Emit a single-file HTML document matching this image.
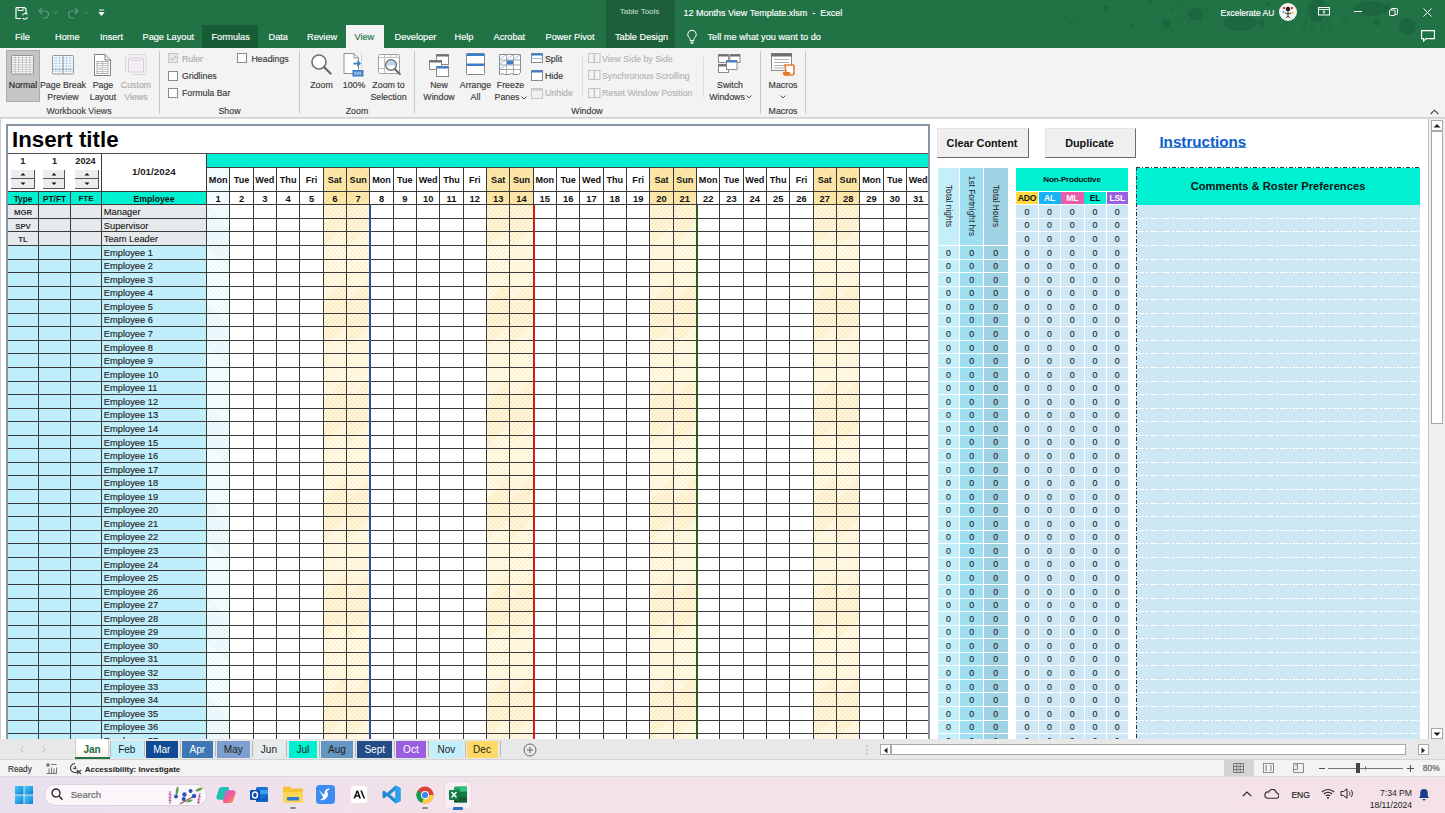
<!DOCTYPE html><html><head><meta charset="utf-8"><title>Excel</title><style>
*{box-sizing:border-box;margin:0;padding:0}
html,body{width:1445px;height:813px;overflow:hidden;background:#fff}
body{position:relative;font-family:"Liberation Sans",sans-serif;color:#000}
.a{position:absolute}
.t{position:absolute;white-space:nowrap;line-height:1}
.t.n{-webkit-text-stroke:0.15px currentColor}
.tb{position:absolute;white-space:nowrap;line-height:1;font-weight:bold}
.w{color:#fff}
.rb{color:#444;font-size:8.3px}
.dis{color:#a8a8a8}
.hl{position:absolute;height:1px;background:#3c3c3c}
.vl{position:absolute;width:1px;background:#3c3c3c}
</style></head><body>
<div class="a" style="left:0;top:0;width:1445px;height:48px;background:#217346"></div>
<div class="a" style="left:606px;top:0;width:69px;height:48px;background:#1c5f3a"></div>
<div class="a" style="left:202px;top:25px;width:56px;height:23px;background:#185c36"></div>
<div class="a" style="left:346px;top:25px;width:38px;height:23px;background:#f3f3f3"></div>
<div class="t n" style="left:15px;top:33.01px;font-size:9.2px;color:#fff;font-weight:normal;">File</div>
<div class="t n" style="left:55px;top:33.01px;font-size:9.2px;color:#fff;font-weight:normal;">Home</div>
<div class="t n" style="left:100px;top:33.01px;font-size:9.2px;color:#fff;font-weight:normal;">Insert</div>
<div class="t n" style="left:142.5px;top:33.01px;font-size:9.2px;color:#fff;font-weight:normal;">Page Layout</div>
<div class="t n" style="left:211.5px;top:33.01px;font-size:9.2px;color:#fff;font-weight:normal;">Formulas</div>
<div class="t n" style="left:268.5px;top:33.01px;font-size:9.2px;color:#fff;font-weight:normal;">Data</div>
<div class="t n" style="left:307px;top:33.01px;font-size:9.2px;color:#fff;font-weight:normal;">Review</div>
<div class="t n" style="left:354.5px;top:33.01px;font-size:9.2px;color:#217346;font-weight:normal;">View</div>
<div class="t n" style="left:394.5px;top:33.01px;font-size:9.2px;color:#fff;font-weight:normal;">Developer</div>
<div class="t n" style="left:454.5px;top:33.01px;font-size:9.2px;color:#fff;font-weight:normal;">Help</div>
<div class="t n" style="left:493.5px;top:33.01px;font-size:9.2px;color:#fff;font-weight:normal;">Acrobat</div>
<div class="t n" style="left:545.5px;top:33.01px;font-size:9.2px;color:#fff;font-weight:normal;">Power Pivot</div>
<div class="t n" style="left:615px;top:33.01px;font-size:9.2px;color:#fff;font-weight:normal;">Table Design</div>
<div class="t n" style="left:619.8px;top:8.11px;font-size:7.9px;color:#b9d3c2;font-weight:normal;">Table Tools</div>
<div class="t n" style="left:683.5px;top:8.88px;font-size:9px;color:#fff;font-weight:normal;">12 Months View Template.xlsm&nbsp;&nbsp;-&nbsp;&nbsp;Excel</div>
<div class="t n" style="left:707.5px;top:33.01px;font-size:9.2px;color:#fff;font-weight:normal;">Tell me what you want to do</div>
<svg class="a" style="left:686px;top:29px" width="12" height="15" viewBox="0 0 12 15"><path d="M6 1.2a4.3 4.3 0 0 0-2.6 7.7c.5.4.8 1 .8 1.6v1h3.6v-1c0-.6.3-1.2.8-1.6A4.3 4.3 0 0 0 6 1.2z" fill="none" stroke="#fff" stroke-width="1"/><path d="M4.3 13h3.4M4.8 14.3h2.4" stroke="#fff" stroke-width="1"/></svg>
<svg class="a" style="left:14px;top:6px" width="14" height="14" viewBox="0 0 14 14"><path d="M2 1.5h8.5l1.5 1.5v4.5M2 1.5v11h5" fill="none" stroke="#fff" stroke-width="1.2"/><path d="M4 1.5v3h5v-3" fill="none" stroke="#fff" stroke-width="1"/><path d="M8.5 9.2a3 3 0 0 1 5-.8M13.5 11.3a3 3 0 0 1-5 .8" fill="none" stroke="#fff" stroke-width="1.1"/></svg>
<svg class="a" style="left:37px;top:6px" width="22" height="13" viewBox="0 0 22 13"><path d="M2 5h6a3.5 3.5 0 0 1 0 7H6M2 5l3-3M2 5l3 3" fill="none" stroke="#5f9a78" stroke-width="1.2"/><path d="M16.5 5.5l2 2 2-2" fill="none" stroke="#5f9a78" stroke-width="0.9"/></svg>
<svg class="a" style="left:67.5px;top:6px" width="22" height="13" viewBox="0 0 22 13"><path d="M10 5H4a3.5 3.5 0 0 0 0 7h2M10 5L7 2M10 5L7 8" fill="none" stroke="#5f9a78" stroke-width="1.2"/><path d="M16.5 5.5l2 2 2-2" fill="none" stroke="#5f9a78" stroke-width="0.9"/></svg>
<svg class="a" style="left:98px;top:9px" width="7" height="8" viewBox="0 0 7 8"><path d="M1 1h5M1 3.5h5l-2.5 3z" fill="#fff" stroke="#fff" stroke-width="0.9"/></svg>
<svg class="a" style="left:1040px;top:0" width="405" height="48" viewBox="1040 0 405 48"><g fill="#000" fill-opacity="0.1" stroke="#000" stroke-opacity="0.06"><g stroke="none"><circle cx="1106.6" cy="8.4" r="2.8"/><circle cx="1149.7" cy="1" r="3"/><circle cx="1132.6" cy="24.7" r="2"/><circle cx="1171.5" cy="8.4" r="1.7"/><ellipse cx="1166.5" cy="23" rx="4.5" ry="4.5"/><ellipse cx="1195.5" cy="14" rx="8" ry="6"/><ellipse cx="1240" cy="23" rx="17" ry="8"/><ellipse cx="1317.3" cy="10" rx="10" ry="11"/><ellipse cx="1370.5" cy="8.5" rx="17" ry="7.5"/><circle cx="1376.9" cy="22" r="3.5"/><circle cx="1407.4" cy="26.2" r="8.5"/><circle cx="1268" cy="4.3" r="2"/></g><path d="M1161 28l-3 5M1166 28v6M1171 28l3 5M1186 12l-8-8M1205 12l8-7M1187 17l-9 5M1204 17l9 5M1191 19l-3 6M1200 19l3 6" fill="none" stroke-width="2"/><path d="M1307 18l-4 12M1313 19l-2 12M1321 19l2 12M1327 18l4 12" fill="none" stroke-width="3"/><path d="M1385 8l5-6v13z M1258 23l6-5v10z" stroke="none"/><path d="M1065 16l6 5 6-5M1066 27l5-5 6 5M1340 14l5 5 5-5M1341 24l4-4 5 4M1277 22l5 5 6-5M1277 30l5-3 6 3" fill="none" stroke-width="1.5"/></g></svg>
<div class="t n" style="left:1220.5px;top:9.10px;font-size:8.5px;color:#fff;font-weight:normal;">Excelerate AU</div>
<div class="a" style="left:1279px;top:3px;width:18px;height:18px;border-radius:50%;background:#f4f4f4"></div>
<svg class="a" style="left:1280px;top:4px" width="16" height="16" viewBox="0 0 16 16"><circle cx="8" cy="5" r="2.3" fill="#222"/><path d="M8 7v5M5 9l3 1 3-1M6 14l2-2 2 2" stroke="#333" stroke-width="1" fill="none"/><circle cx="4" cy="4" r="1.2" fill="#e33"/><circle cx="12" cy="4" r="1.2" fill="#e33"/><circle cx="3.5" cy="8" r="1" fill="#29f"/><circle cx="12.5" cy="9" r="1" fill="#fb0"/></svg>
<svg class="a" style="left:1317.5px;top:7px" width="12" height="9" viewBox="0 0 12 9"><rect x="0.5" y="0.5" width="11" height="7.5" fill="none" stroke="#fff" stroke-width="1"/><path d="M0.5 2.5h11M6 3.8v3.4M4.6 5.2L6 3.8l1.4 1.4" fill="none" stroke="#fff" stroke-width="0.9"/></svg>
<div class="a" style="left:1354px;top:11px;width:8px;height:1px;background:#fff"></div>
<svg class="a" style="left:1388.5px;top:7.5px" width="9" height="8" viewBox="0 0 9 8"><rect x="0.5" y="2" width="5.5" height="5.5" rx="0.8" fill="none" stroke="#fff" stroke-width="1"/><path d="M2.3 2V1.3c0-.5.3-.8.8-.8h4.6c.5 0 .8.3.8.8v4.4c0 .5-.3.8-.8.8H6" fill="none" stroke="#fff" stroke-width="1"/></svg>
<svg class="a" style="left:1423px;top:7.5px" width="9" height="9" viewBox="0 0 9 9"><path d="M0.5 0.5l8 8M8.5 0.5l-8 8" stroke="#fff" stroke-width="1"/></svg>
<svg class="a" style="left:1421px;top:30px" width="14" height="12" viewBox="0 0 14 12"><path d="M0.6 0.6h12.8v8H5l-2.5 2.5V8.6H0.6z" fill="none" stroke="#fff" stroke-width="1.1"/></svg>
<div class="a" style="left:0;top:48px;width:1445px;height:70px;background:#f3f3f3"></div>
<div class="a" style="left:0;top:117px;width:1445px;height:1px;background:#cfcfcf"></div>
<div class="a" style="left:0;top:118px;width:1445px;height:1px;background:#dedede"></div>
<div class="a" style="left:159px;top:51px;width:1px;height:63px;background:#c8c8c8"></div>
<div class="a" style="left:299px;top:51px;width:1px;height:63px;background:#c8c8c8"></div>
<div class="a" style="left:414px;top:51px;width:1px;height:63px;background:#c8c8c8"></div>
<div class="a" style="left:760px;top:51px;width:1px;height:63px;background:#c8c8c8"></div>
<div class="a" style="left:805px;top:51px;width:1px;height:63px;background:#c8c8c8"></div>
<div class="a" style="left:582px;top:57px;width:1px;height:40px;background:#dcdcdc"></div>
<div class="a" style="left:703px;top:57px;width:1px;height:40px;background:#dcdcdc"></div>
<div class="a" style="left:6px;top:50px;width:34px;height:52px;background:#c5c5c5;border:1px solid #ababab"></div>
<div class="t n" style="left:-127px;width:300px;text-align:center;top:80.95px;font-size:8.8px;color:#262626;font-weight:normal;">Normal</div>
<div class="t n" style="left:-87px;width:300px;text-align:center;top:80.95px;font-size:8.8px;color:#3a3a3a;font-weight:normal;">Page Break</div>
<div class="t n" style="left:-87px;width:300px;text-align:center;top:93.15px;font-size:8.8px;color:#3a3a3a;font-weight:normal;">Preview</div>
<div class="t n" style="left:-47px;width:300px;text-align:center;top:80.95px;font-size:8.8px;color:#3a3a3a;font-weight:normal;">Page</div>
<div class="t n" style="left:-47px;width:300px;text-align:center;top:93.15px;font-size:8.8px;color:#3a3a3a;font-weight:normal;">Layout</div>
<div class="t n" style="left:-14px;width:300px;text-align:center;top:80.95px;font-size:8.8px;color:#ababab;font-weight:normal;">Custom</div>
<div class="t n" style="left:-14px;width:300px;text-align:center;top:93.15px;font-size:8.8px;color:#ababab;font-weight:normal;">Views</div>
<div class="t n" style="left:-71px;width:300px;text-align:center;top:107.05px;font-size:8.8px;color:#444;font-weight:normal;">Workbook Views</div>
<div class="t n" style="left:79.5px;width:300px;text-align:center;top:107.05px;font-size:8.8px;color:#3a3a3a;font-weight:normal;">Show</div>
<div class="t n" style="left:207px;width:300px;text-align:center;top:107.05px;font-size:8.8px;color:#3a3a3a;font-weight:normal;">Zoom</div>
<div class="t n" style="left:437px;width:300px;text-align:center;top:107.05px;font-size:8.8px;color:#3a3a3a;font-weight:normal;">Window</div>
<div class="t n" style="left:633px;width:300px;text-align:center;top:107.05px;font-size:8.8px;color:#3a3a3a;font-weight:normal;">Macros</div>
<svg class="a" style="left:11px;top:54.5px" width="24" height="20" viewBox="0 0 24 20"><rect x="0.5" y="0.5" width="22" height="18.5" rx="1" fill="#fff" stroke="#8f8f8f"/><path d="M4.17 0.5v18.5M7.83 0.5v18.5M11.50 0.5v18.5M15.17 0.5v18.5M18.83 0.5v18.5M0.5 2.81h22M0.5 5.12h22M0.5 7.44h22M0.5 9.75h22M0.5 12.06h22M0.5 14.38h22M0.5 16.69h22" stroke="#b9b9b9" stroke-width="0.8"/></svg>
<svg class="a" style="left:52px;top:54.5px" width="23" height="20" viewBox="0 0 23 20"><rect x="0.5" y="0.5" width="21" height="18.5" rx="1" fill="#fff" stroke="#8f8f8f"/><path d="M4.00 0.5v18.5M7.50 0.5v18.5M11.00 0.5v18.5M14.50 0.5v18.5M18.00 0.5v18.5M0.5 3.14h21M0.5 5.79h21M0.5 8.43h21M0.5 11.07h21M0.5 13.71h21M0.5 16.36h21" stroke="#b3cff0" stroke-width="0.8"/><path d="M11 0.5v18.5" stroke="#8f8f8f" stroke-width="0.9"/><path d="M0.5 14.5h21" stroke="#8f8f8f" stroke-width="0.9" stroke-dasharray="1.5 1"/></svg>
<svg class="a" style="left:94px;top:53.5px" width="18" height="22" viewBox="0 0 18 22"><path d="M0.5 0.5h10.5l5.5 5.5v15.5h-16z" fill="#fff" stroke="#7f7f7f"/><path d="M11 0.5v5.5h5.5" fill="none" stroke="#7f7f7f"/><rect x="3" y="7.5" width="11" height="12" fill="#fff" stroke="#9a9a9a" stroke-width="0.8"/><path d="M3 9.5h11M3 11.5h11M3 13.5h11M3 15.5h11M3 17.5h11M8.5 7.5v12" stroke="#a8a8a8" stroke-width="0.7"/><path d="M3 13.5h11v2H3z" fill="#e4e4e4"/></svg>
<svg class="a" style="left:124px;top:54px" width="24" height="22" viewBox="0 0 24 22"><path d="M5 0.5h16M21 0.5v1M5 0.5v1" stroke="#cfcfcf" stroke-width="0.8"/><path d="M1.5 4v13M0.5 4h2M0.5 17h2" stroke="#cfcfcf" stroke-width="0.8"/><rect x="4.5" y="4" width="15" height="14" rx="1" fill="#f5eff6" stroke="#cfcfcf"/><path d="M6.5 6.5h11" stroke="#d8c9dc"/><path d="M8 20.5h14v-17" fill="none" stroke="#cfcfcf" stroke-width="0.8"/></svg>
<div class="a" style="left:168px;top:53px;width:10px;height:10px;background:#e6e6e6;border:1px solid #c6c6c6"></div>
<svg class="a" style="left:168px;top:53px" width="10" height="10" viewBox="0 0 10 10"><path d="M2.2 5.2l2 2 3.8-4.2" fill="none" stroke="#b0b0b0" stroke-width="1"/></svg>
<div class="a" style="left:168px;top:70.5px;width:10px;height:10px;background:#fff;border:1px solid #8a8a8a"></div>
<div class="a" style="left:168px;top:88px;width:10px;height:10px;background:#fff;border:1px solid #8a8a8a"></div>
<div class="a" style="left:237px;top:53px;width:10px;height:10px;background:#fff;border:1px solid #8a8a8a"></div>
<div class="t n" style="left:182px;top:54.55px;font-size:8.8px;color:#ababab;font-weight:normal;">Ruler</div>
<div class="t n" style="left:182px;top:71.85px;font-size:8.8px;color:#3a3a3a;font-weight:normal;">Gridlines</div>
<div class="t n" style="left:182px;top:89.15px;font-size:8.8px;color:#3a3a3a;font-weight:normal;">Formula Bar</div>
<div class="t n" style="left:251.5px;top:54.55px;font-size:8.8px;color:#3a3a3a;font-weight:normal;">Headings</div>
<div class="t n" style="left:171.5px;width:300px;text-align:center;top:80.95px;font-size:8.8px;color:#3a3a3a;font-weight:normal;">Zoom</div>
<div class="t n" style="left:204px;width:300px;text-align:center;top:80.95px;font-size:8.8px;color:#3a3a3a;font-weight:normal;">100%</div>
<div class="t n" style="left:238.5px;width:300px;text-align:center;top:80.95px;font-size:8.8px;color:#3a3a3a;font-weight:normal;">Zoom to</div>
<div class="t n" style="left:238.5px;width:300px;text-align:center;top:93.15px;font-size:8.8px;color:#3a3a3a;font-weight:normal;">Selection</div>
<svg class="a" style="left:310px;top:53px" width="23" height="23" viewBox="0 0 23 23"><circle cx="9" cy="9" r="7" fill="#fff" stroke="#6e6e6e" stroke-width="1.6"/><path d="M14 14l6.5 6.5" stroke="#6e6e6e" stroke-width="2.4" stroke-linecap="round"/></svg>
<svg class="a" style="left:343px;top:52px" width="22" height="25" viewBox="0 0 22 25"><path d="M1 1.5h10l4.5 4.5v15.5H1z" fill="#fff" stroke="#8f8f8f"/><path d="M11 1.5v4.5h4.5" fill="none" stroke="#8f8f8f"/><path d="M18.5 1.5v16" stroke="#b5b5b5" stroke-dasharray="1 1"/><path d="M10.5 11.6h6.5M14.3 9.2l2.6 2.4-2.6 2.4" fill="none" stroke="#3d7cc9" stroke-width="1.6"/><rect x="9.5" y="18" width="11" height="6.5" fill="#3d7cc9"/><path d="M11.3 21.2h7.4" stroke="#e8f0fa" stroke-width="3" stroke-dasharray="2 .5"/><rect x="11" y="19.8" width="8" height="3" fill="#3d7cc9" fill-opacity=".45"/></svg>
<svg class="a" style="left:377px;top:54px" width="25" height="24" viewBox="0 0 25 24"><rect x="1.5" y="0.5" width="21" height="19" rx="1" fill="#fff" stroke="#a0a0a0"/><path d="M1.5 3.5h21M1.5 14.5h7M7.5 0.5v19M13.5 0.5v3M19.5 0.5v3" stroke="#c0c0c0"/><circle cx="14" cy="11" r="5.3" fill="#fff" stroke="#6e6e6e" stroke-width="1.5"/><path d="M9.5 11.5a4.5 4.5 0 0 1 9 0z" fill="#b9d3ef"/><path d="M17.8 15l5 5" stroke="#6e6e6e" stroke-width="2.2" stroke-linecap="round"/></svg>
<div class="t n" style="left:289px;width:300px;text-align:center;top:80.95px;font-size:8.8px;color:#3a3a3a;font-weight:normal;">New</div>
<div class="t n" style="left:289px;width:300px;text-align:center;top:93.15px;font-size:8.8px;color:#3a3a3a;font-weight:normal;">Window</div>
<div class="t n" style="left:325.5px;width:300px;text-align:center;top:80.95px;font-size:8.8px;color:#3a3a3a;font-weight:normal;">Arrange</div>
<div class="t n" style="left:325.5px;width:300px;text-align:center;top:93.15px;font-size:8.8px;color:#3a3a3a;font-weight:normal;">All</div>
<div class="t n" style="left:360.5px;width:300px;text-align:center;top:80.95px;font-size:8.8px;color:#3a3a3a;font-weight:normal;">Freeze</div>
<div class="t n" style="left:357px;width:300px;text-align:center;top:93.15px;font-size:8.8px;color:#3a3a3a;font-weight:normal;">Panes</div>
<svg class="a" style="left:521px;top:96px" width="6" height="4" viewBox="0 0 6 4"><path d="M0.5 0.5l2.5 2.5 2.5-2.5" fill="none" stroke="#555"/></svg>
<svg class="a" style="left:428.5px;top:53.5px" width="22" height="23" viewBox="0 0 22 23"><rect x="7.5" y="0.5" width="12" height="10" fill="#fff" stroke="#8a8a8a"/><rect x="7.5" y="0.5" width="12" height="2" fill="#6e6e6e"/><rect x="0.5" y="6.5" width="12" height="9" fill="#fff" stroke="#8a8a8a"/><rect x="0.5" y="6.5" width="12" height="2" fill="#6e6e6e"/><rect x="7.5" y="12.5" width="12" height="10" fill="#fff" stroke="#8a8a8a"/><rect x="7.5" y="12.5" width="12" height="2" fill="#3d7cc9"/></svg>
<svg class="a" style="left:466px;top:53px" width="20" height="23" viewBox="0 0 20 23"><rect x="0.5" y="0.5" width="18" height="21" rx="0.8" fill="#fff" stroke="#8a8a8a"/><rect x="0.5" y="0.5" width="18" height="2.5" fill="#3d7cc9"/><rect x="0.5" y="10.5" width="18" height="2.5" fill="#3d7cc9"/></svg>
<svg class="a" style="left:499px;top:54px" width="23" height="22" viewBox="0 0 23 22"><path d="M0.5 0.5h21v18l-2 2h-5l-2-1-2 1h-5l-2-1-2 1h-1z" fill="#fff" stroke="#8a8a8a"/><path d="M0.5 6h21M0.5 11h21M0.5 15.5h21M7.5 0.5v20M14.5 0.5v20" stroke="#a8a8a8"/><path d="M1 5l6-4M1 10l6-4M1 15l6-4M8 5l6-4M15 5l6-4" stroke="#9cc0e6" stroke-width="1"/><rect x="8" y="6.5" width="6" height="4" fill="#3d7cc9"/></svg>
<svg class="a" style="left:531px;top:53px" width="12" height="10" viewBox="0 0 12 10"><rect x="0.5" y="0.5" width="11" height="9" fill="#fff" stroke="#8a8a8a"/><rect x="0.5" y="0.5" width="11" height="2" fill="#3d7cc9"/><path d="M0.5 5.5h11" stroke="#9cc0e6"/></svg>
<svg class="a" style="left:531px;top:70px" width="12" height="11" viewBox="0 0 12 11"><rect x="0.5" y="0.5" width="11" height="10" fill="#fff" stroke="#8a8a8a"/><rect x="0.5" y="0.5" width="11" height="2" fill="#3d7cc9"/></svg>
<svg class="a" style="left:531px;top:88px" width="12" height="11" viewBox="0 0 12 11"><rect x="0.5" y="0.5" width="11" height="10" fill="#f0f0f0" stroke="#c8c8c8"/><rect x="0.5" y="0.5" width="11" height="2" fill="#c8c8c8"/></svg>
<div class="t n" style="left:545px;top:54.55px;font-size:8.8px;color:#333;font-weight:normal;">Split</div>
<div class="t n" style="left:545px;top:71.85px;font-size:8.8px;color:#333;font-weight:normal;">Hide</div>
<div class="t n" style="left:545px;top:89.15px;font-size:8.8px;color:#b0b0b0;font-weight:normal;">Unhide</div>
<svg class="a" style="left:588px;top:53px" width="13" height="11" viewBox="0 0 13 11"><rect x="0.5" y="0.5" width="5.5" height="9" fill="none" stroke="#c4c4c4"/><rect x="6.5" y="0.5" width="5.5" height="9" fill="none" stroke="#c4c4c4"/></svg>
<svg class="a" style="left:588px;top:70px" width="13" height="11" viewBox="0 0 13 11"><rect x="0.5" y="0.5" width="5.5" height="9" fill="none" stroke="#c4c4c4"/><rect x="6.5" y="0.5" width="5.5" height="9" fill="none" stroke="#c4c4c4"/></svg>
<svg class="a" style="left:588px;top:88px" width="13" height="11" viewBox="0 0 13 11"><rect x="0.5" y="0.5" width="5.5" height="9" fill="none" stroke="#c4c4c4"/><rect x="6.5" y="0.5" width="5.5" height="9" fill="none" stroke="#c4c4c4"/></svg>
<div class="t n" style="left:602px;top:54.55px;font-size:8.8px;color:#b3b3b3;font-weight:normal;">View Side by Side</div>
<div class="t n" style="left:602px;top:71.85px;font-size:8.8px;color:#b3b3b3;font-weight:normal;">Synchronous Scrolling</div>
<div class="t n" style="left:602px;top:89.15px;font-size:8.8px;color:#b3b3b3;font-weight:normal;">Reset Window Position</div>
<div class="t n" style="left:580px;width:300px;text-align:center;top:80.95px;font-size:8.8px;color:#3a3a3a;font-weight:normal;">Switch</div>
<div class="t n" style="left:577px;width:300px;text-align:center;top:93.15px;font-size:8.8px;color:#3a3a3a;font-weight:normal;">Windows</div>
<svg class="a" style="left:746px;top:95px" width="6" height="4" viewBox="0 0 6 4"><path d="M0.5 0.5l2.5 2.5 2.5-2.5" fill="none" stroke="#555"/></svg>
<svg class="a" style="left:718px;top:54px" width="23" height="20" viewBox="0 0 23 20"><rect x="0.5" y="0.5" width="10" height="8" fill="#fff" stroke="#8a8a8a"/><rect x="0.5" y="0.5" width="10" height="2" fill="#6e6e6e"/><rect x="12" y="0.5" width="10" height="8" fill="#fff" stroke="#8a8a8a"/><rect x="12" y="0.5" width="10" height="2" fill="#6e6e6e"/><rect x="0.5" y="10.5" width="10" height="8" fill="#fff" stroke="#8a8a8a"/><rect x="0.5" y="10.5" width="10" height="2" fill="#6e6e6e"/><rect x="8.5" y="6.5" width="10.5" height="9" fill="#fff" stroke="#8a8a8a"/><rect x="8.5" y="6.5" width="10.5" height="2" fill="#3d7cc9"/></svg>
<div class="t n" style="left:633px;width:300px;text-align:center;top:80.95px;font-size:8.8px;color:#3a3a3a;font-weight:normal;">Macros</div>
<svg class="a" style="left:780px;top:95px" width="6" height="4" viewBox="0 0 6 4"><path d="M0.5 0.5l2.5 2.5 2.5-2.5" fill="none" stroke="#555"/></svg>
<svg class="a" style="left:771px;top:53px" width="25" height="23" viewBox="0 0 25 23"><rect x="0.5" y="0.5" width="20" height="17" fill="#fff" stroke="#8a8a8a"/><rect x="0.5" y="0.5" width="20" height="3" fill="#6e6e6e"/><path d="M3 6.5h15M3 9.5h15M3 12.5h15M3 15h10" stroke="#b0b0b0"/><path d="M14 12h8l1 1v7a2 2 0 0 1-2 2h-8a2 2 0 0 0 2-2z" fill="#fff" stroke="#e57a2e" stroke-width="1.6"/><rect x="12" y="19" width="7" height="3" fill="#e57a2e"/></svg>
<svg class="a" style="left:1430px;top:109px" width="9" height="6" viewBox="0 0 9 6"><path d="M0.7 5l3.8-3.8 3.8 3.8" fill="none" stroke="#444" stroke-width="1.1"/></svg>
<div class="a" style="left:0;top:119px;width:1428px;height:620px;background:#fff"></div>
<div class="a" style="left:0;top:119px;width:1px;height:620px;background:#d0d0d0"></div>
<div class="a" style="left:1428px;top:119px;width:1px;height:620px;background:#c4c4c4"></div>
<div class="a" style="left:1429px;top:119px;width:16px;height:620px;background:#f0f0f0"></div>
<div class="a" style="left:1431px;top:120px;width:12px;height:11px;background:#fff;border:1px solid #a8a8a8"></div>
<svg class="a" style="left:1433px;top:123px" width="8" height="5" viewBox="0 0 8 5"><path d="M0.5 4.5L4 1l3.5 3.5z" fill="#222"/></svg>
<div class="a" style="left:1431px;top:131px;width:12px;height:293px;background:#fff;border:1px solid #a8a8a8"></div>
<div class="a" style="left:1431px;top:728px;width:12px;height:11px;background:#fff;border:1px solid #a8a8a8"></div>
<svg class="a" style="left:1433px;top:732px" width="8" height="5" viewBox="0 0 8 5"><path d="M0.5 0.5L4 4l3.5-3.5z" fill="#222"/></svg>
<div class="a" style="left:0;top:119px;width:1428px;height:620px;overflow:hidden">
<div class="a" style="left:8.00px;top:7.00px;width:920.00px;height:27.00px;background:#fff"></div>
<div class="t" style="left:12.00px;top:10.32px;font-size:22.3px;color:#000;font-weight:bold;">Insert title</div>
<div class="a" style="left:6.00px;top:5.00px;width:924.00px;height:2.00px;background:#8794a4"></div>
<div class="a" style="left:6.00px;top:5.00px;width:2.00px;height:615.00px;background:#8794a4"></div>
<div class="a" style="left:928.00px;top:5.00px;width:2.00px;height:615.00px;background:#8794a4"></div>
<div class="a" style="left:207.00px;top:34.00px;width:721.00px;height:14.00px;background:#00f0d2"></div>
<div class="a" style="left:8.00px;top:72.20px;width:198.50px;height:13.56px;background:#00f0d2"></div>
<div class="a" style="left:206.50px;top:48.00px;width:23.33px;height:572.00px;background:repeating-linear-gradient(45deg,#def4fb 0 1px,#fafdfe 1px 2.8px)"></div>
<div class="a" style="left:323.17px;top:48.00px;width:23.33px;height:37.76px;background:repeating-linear-gradient(135deg,#f9df95 0 1px,#fde9b0 1px 2.6px)"></div>
<div class="a" style="left:323.17px;top:85.76px;width:23.33px;height:534.24px;background:repeating-linear-gradient(135deg,#fcebb8 0 1px,#fffaea 1px 2.8px)"></div>
<div class="a" style="left:346.50px;top:48.00px;width:23.33px;height:37.76px;background:repeating-linear-gradient(135deg,#f9df95 0 1px,#fde9b0 1px 2.6px)"></div>
<div class="a" style="left:346.50px;top:85.76px;width:23.33px;height:534.24px;background:repeating-linear-gradient(135deg,#fcebb8 0 1px,#fffaea 1px 2.8px)"></div>
<div class="a" style="left:486.50px;top:48.00px;width:23.33px;height:37.76px;background:repeating-linear-gradient(135deg,#f9df95 0 1px,#fde9b0 1px 2.6px)"></div>
<div class="a" style="left:486.50px;top:85.76px;width:23.33px;height:534.24px;background:repeating-linear-gradient(135deg,#fcebb8 0 1px,#fffaea 1px 2.8px)"></div>
<div class="a" style="left:509.83px;top:48.00px;width:23.33px;height:37.76px;background:repeating-linear-gradient(135deg,#f9df95 0 1px,#fde9b0 1px 2.6px)"></div>
<div class="a" style="left:509.83px;top:85.76px;width:23.33px;height:534.24px;background:repeating-linear-gradient(135deg,#fcebb8 0 1px,#fffaea 1px 2.8px)"></div>
<div class="a" style="left:649.83px;top:48.00px;width:23.33px;height:37.76px;background:repeating-linear-gradient(135deg,#f9df95 0 1px,#fde9b0 1px 2.6px)"></div>
<div class="a" style="left:649.83px;top:85.76px;width:23.33px;height:534.24px;background:repeating-linear-gradient(135deg,#fcebb8 0 1px,#fffaea 1px 2.8px)"></div>
<div class="a" style="left:673.17px;top:48.00px;width:23.33px;height:37.76px;background:repeating-linear-gradient(135deg,#f9df95 0 1px,#fde9b0 1px 2.6px)"></div>
<div class="a" style="left:673.17px;top:85.76px;width:23.33px;height:534.24px;background:repeating-linear-gradient(135deg,#fcebb8 0 1px,#fffaea 1px 2.8px)"></div>
<div class="a" style="left:813.17px;top:48.00px;width:23.33px;height:37.76px;background:repeating-linear-gradient(135deg,#f9df95 0 1px,#fde9b0 1px 2.6px)"></div>
<div class="a" style="left:813.17px;top:85.76px;width:23.33px;height:534.24px;background:repeating-linear-gradient(135deg,#fcebb8 0 1px,#fffaea 1px 2.8px)"></div>
<div class="a" style="left:836.50px;top:48.00px;width:23.33px;height:37.76px;background:repeating-linear-gradient(135deg,#f9df95 0 1px,#fde9b0 1px 2.6px)"></div>
<div class="a" style="left:836.50px;top:85.76px;width:23.33px;height:534.24px;background:repeating-linear-gradient(135deg,#fcebb8 0 1px,#fffaea 1px 2.8px)"></div>
<div class="a" style="left:8.00px;top:85.76px;width:198.50px;height:13.56px;background:#e6e9ec"></div>
<div class="a" style="left:8.00px;top:99.32px;width:198.50px;height:13.56px;background:#e6e9ec"></div>
<div class="a" style="left:8.00px;top:112.88px;width:198.50px;height:13.56px;background:#e6e9ec"></div>
<div class="a" style="left:8.00px;top:126.44px;width:198.50px;height:13.56px;background:#c0effb"></div>
<div class="a" style="left:8.00px;top:140.00px;width:198.50px;height:13.56px;background:#c0effb"></div>
<div class="a" style="left:8.00px;top:153.56px;width:198.50px;height:13.56px;background:#c0effb"></div>
<div class="a" style="left:8.00px;top:167.12px;width:198.50px;height:13.56px;background:#c0effb"></div>
<div class="a" style="left:8.00px;top:180.68px;width:198.50px;height:13.56px;background:#c0effb"></div>
<div class="a" style="left:8.00px;top:194.24px;width:198.50px;height:13.56px;background:#c0effb"></div>
<div class="a" style="left:8.00px;top:207.80px;width:198.50px;height:13.56px;background:#c0effb"></div>
<div class="a" style="left:8.00px;top:221.36px;width:198.50px;height:13.56px;background:#c0effb"></div>
<div class="a" style="left:8.00px;top:234.92px;width:198.50px;height:13.56px;background:#c0effb"></div>
<div class="a" style="left:8.00px;top:248.48px;width:198.50px;height:13.56px;background:#c0effb"></div>
<div class="a" style="left:8.00px;top:262.04px;width:198.50px;height:13.56px;background:#c0effb"></div>
<div class="a" style="left:8.00px;top:275.60px;width:198.50px;height:13.56px;background:#c0effb"></div>
<div class="a" style="left:8.00px;top:289.16px;width:198.50px;height:13.56px;background:#c0effb"></div>
<div class="a" style="left:8.00px;top:302.72px;width:198.50px;height:13.56px;background:#c0effb"></div>
<div class="a" style="left:8.00px;top:316.28px;width:198.50px;height:13.56px;background:#c0effb"></div>
<div class="a" style="left:8.00px;top:329.84px;width:198.50px;height:13.56px;background:#c0effb"></div>
<div class="a" style="left:8.00px;top:343.40px;width:198.50px;height:13.56px;background:#c0effb"></div>
<div class="a" style="left:8.00px;top:356.96px;width:198.50px;height:13.56px;background:#c0effb"></div>
<div class="a" style="left:8.00px;top:370.52px;width:198.50px;height:13.56px;background:#c0effb"></div>
<div class="a" style="left:8.00px;top:384.08px;width:198.50px;height:13.56px;background:#c0effb"></div>
<div class="a" style="left:8.00px;top:397.64px;width:198.50px;height:13.56px;background:#c0effb"></div>
<div class="a" style="left:8.00px;top:411.20px;width:198.50px;height:13.56px;background:#c0effb"></div>
<div class="a" style="left:8.00px;top:424.76px;width:198.50px;height:13.56px;background:#c0effb"></div>
<div class="a" style="left:8.00px;top:438.32px;width:198.50px;height:13.56px;background:#c0effb"></div>
<div class="a" style="left:8.00px;top:451.88px;width:198.50px;height:13.56px;background:#c0effb"></div>
<div class="a" style="left:8.00px;top:465.44px;width:198.50px;height:13.56px;background:#c0effb"></div>
<div class="a" style="left:8.00px;top:479.00px;width:198.50px;height:13.56px;background:#c0effb"></div>
<div class="a" style="left:8.00px;top:492.56px;width:198.50px;height:13.56px;background:#c0effb"></div>
<div class="a" style="left:8.00px;top:506.12px;width:198.50px;height:13.56px;background:#c0effb"></div>
<div class="a" style="left:8.00px;top:519.68px;width:198.50px;height:13.56px;background:#c0effb"></div>
<div class="a" style="left:8.00px;top:533.24px;width:198.50px;height:13.56px;background:#c0effb"></div>
<div class="a" style="left:8.00px;top:546.80px;width:198.50px;height:13.56px;background:#c0effb"></div>
<div class="a" style="left:8.00px;top:560.36px;width:198.50px;height:13.56px;background:#c0effb"></div>
<div class="a" style="left:8.00px;top:573.92px;width:198.50px;height:13.56px;background:#c0effb"></div>
<div class="a" style="left:8.00px;top:587.48px;width:198.50px;height:13.56px;background:#c0effb"></div>
<div class="a" style="left:8.00px;top:601.04px;width:198.50px;height:13.56px;background:#c0effb"></div>
<div class="a" style="left:8.00px;top:614.60px;width:198.50px;height:13.56px;background:#c0effb"></div>
<div class="a" style="left:8.00px;top:33.50px;width:920.00px;height:1.00px;background:#505050"></div>
<div class="a" style="left:206.50px;top:47.60px;width:721.50px;height:1.00px;background:#444"></div>
<div class="a" style="left:8.00px;top:71.70px;width:920.00px;height:1.00px;background:#3a3a3a"></div>
<div class="a" style="left:8.00px;top:85.26px;width:920.00px;height:1.00px;background:#3a3a3a"></div>
<div class="a" style="left:8.00px;top:98.82px;width:920.00px;height:1.00px;background:#3a3a3a"></div>
<div class="a" style="left:8.00px;top:112.38px;width:920.00px;height:1.00px;background:#3a3a3a"></div>
<div class="a" style="left:8.00px;top:125.94px;width:920.00px;height:1.00px;background:#3a3a3a"></div>
<div class="a" style="left:8.00px;top:139.50px;width:920.00px;height:1.00px;background:#3a3a3a"></div>
<div class="a" style="left:8.00px;top:153.06px;width:920.00px;height:1.00px;background:#3a3a3a"></div>
<div class="a" style="left:8.00px;top:166.62px;width:920.00px;height:1.00px;background:#3a3a3a"></div>
<div class="a" style="left:8.00px;top:180.18px;width:920.00px;height:1.00px;background:#3a3a3a"></div>
<div class="a" style="left:8.00px;top:193.74px;width:920.00px;height:1.00px;background:#3a3a3a"></div>
<div class="a" style="left:8.00px;top:207.30px;width:920.00px;height:1.00px;background:#3a3a3a"></div>
<div class="a" style="left:8.00px;top:220.86px;width:920.00px;height:1.00px;background:#3a3a3a"></div>
<div class="a" style="left:8.00px;top:234.42px;width:920.00px;height:1.00px;background:#3a3a3a"></div>
<div class="a" style="left:8.00px;top:247.98px;width:920.00px;height:1.00px;background:#3a3a3a"></div>
<div class="a" style="left:8.00px;top:261.54px;width:920.00px;height:1.00px;background:#3a3a3a"></div>
<div class="a" style="left:8.00px;top:275.10px;width:920.00px;height:1.00px;background:#3a3a3a"></div>
<div class="a" style="left:8.00px;top:288.66px;width:920.00px;height:1.00px;background:#3a3a3a"></div>
<div class="a" style="left:8.00px;top:302.22px;width:920.00px;height:1.00px;background:#3a3a3a"></div>
<div class="a" style="left:8.00px;top:315.78px;width:920.00px;height:1.00px;background:#3a3a3a"></div>
<div class="a" style="left:8.00px;top:329.34px;width:920.00px;height:1.00px;background:#3a3a3a"></div>
<div class="a" style="left:8.00px;top:342.90px;width:920.00px;height:1.00px;background:#3a3a3a"></div>
<div class="a" style="left:8.00px;top:356.46px;width:920.00px;height:1.00px;background:#3a3a3a"></div>
<div class="a" style="left:8.00px;top:370.02px;width:920.00px;height:1.00px;background:#3a3a3a"></div>
<div class="a" style="left:8.00px;top:383.58px;width:920.00px;height:1.00px;background:#3a3a3a"></div>
<div class="a" style="left:8.00px;top:397.14px;width:920.00px;height:1.00px;background:#3a3a3a"></div>
<div class="a" style="left:8.00px;top:410.70px;width:920.00px;height:1.00px;background:#3a3a3a"></div>
<div class="a" style="left:8.00px;top:424.26px;width:920.00px;height:1.00px;background:#3a3a3a"></div>
<div class="a" style="left:8.00px;top:437.82px;width:920.00px;height:1.00px;background:#3a3a3a"></div>
<div class="a" style="left:8.00px;top:451.38px;width:920.00px;height:1.00px;background:#3a3a3a"></div>
<div class="a" style="left:8.00px;top:464.94px;width:920.00px;height:1.00px;background:#3a3a3a"></div>
<div class="a" style="left:8.00px;top:478.50px;width:920.00px;height:1.00px;background:#3a3a3a"></div>
<div class="a" style="left:8.00px;top:492.06px;width:920.00px;height:1.00px;background:#3a3a3a"></div>
<div class="a" style="left:8.00px;top:505.62px;width:920.00px;height:1.00px;background:#3a3a3a"></div>
<div class="a" style="left:8.00px;top:519.18px;width:920.00px;height:1.00px;background:#3a3a3a"></div>
<div class="a" style="left:8.00px;top:532.74px;width:920.00px;height:1.00px;background:#3a3a3a"></div>
<div class="a" style="left:8.00px;top:546.30px;width:920.00px;height:1.00px;background:#3a3a3a"></div>
<div class="a" style="left:8.00px;top:559.86px;width:920.00px;height:1.00px;background:#3a3a3a"></div>
<div class="a" style="left:8.00px;top:573.42px;width:920.00px;height:1.00px;background:#3a3a3a"></div>
<div class="a" style="left:8.00px;top:586.98px;width:920.00px;height:1.00px;background:#3a3a3a"></div>
<div class="a" style="left:8.00px;top:600.54px;width:920.00px;height:1.00px;background:#3a3a3a"></div>
<div class="a" style="left:8.00px;top:614.10px;width:920.00px;height:1.00px;background:#3a3a3a"></div>
<div class="a" style="left:8.00px;top:627.66px;width:920.00px;height:1.00px;background:#3a3a3a"></div>
<div class="a" style="left:38.00px;top:72.20px;width:1.00px;height:547.80px;background:#3a3a3a"></div>
<div class="a" style="left:70.00px;top:72.20px;width:1.00px;height:547.80px;background:#3a3a3a"></div>
<div class="a" style="left:101.00px;top:34.00px;width:1.00px;height:586.00px;background:#3a3a3a"></div>
<div class="a" style="left:206.00px;top:34.00px;width:1.00px;height:586.00px;background:#3a3a3a"></div>
<div class="a" style="left:229.33px;top:48.00px;width:1.00px;height:572.00px;background:#3a3a3a"></div>
<div class="a" style="left:252.67px;top:48.00px;width:1.00px;height:572.00px;background:#3a3a3a"></div>
<div class="a" style="left:276.00px;top:48.00px;width:1.00px;height:572.00px;background:#3a3a3a"></div>
<div class="a" style="left:299.33px;top:48.00px;width:1.00px;height:572.00px;background:#3a3a3a"></div>
<div class="a" style="left:322.67px;top:48.00px;width:1.00px;height:572.00px;background:#3a3a3a"></div>
<div class="a" style="left:346.00px;top:48.00px;width:1.00px;height:572.00px;background:#3a3a3a"></div>
<div class="a" style="left:369.33px;top:48.00px;width:1.00px;height:572.00px;background:#3a3a3a"></div>
<div class="a" style="left:392.67px;top:48.00px;width:1.00px;height:572.00px;background:#3a3a3a"></div>
<div class="a" style="left:416.00px;top:48.00px;width:1.00px;height:572.00px;background:#3a3a3a"></div>
<div class="a" style="left:439.33px;top:48.00px;width:1.00px;height:572.00px;background:#3a3a3a"></div>
<div class="a" style="left:462.67px;top:48.00px;width:1.00px;height:572.00px;background:#3a3a3a"></div>
<div class="a" style="left:486.00px;top:48.00px;width:1.00px;height:572.00px;background:#3a3a3a"></div>
<div class="a" style="left:509.33px;top:48.00px;width:1.00px;height:572.00px;background:#3a3a3a"></div>
<div class="a" style="left:532.67px;top:48.00px;width:1.00px;height:572.00px;background:#3a3a3a"></div>
<div class="a" style="left:556.00px;top:48.00px;width:1.00px;height:572.00px;background:#3a3a3a"></div>
<div class="a" style="left:579.33px;top:48.00px;width:1.00px;height:572.00px;background:#3a3a3a"></div>
<div class="a" style="left:602.67px;top:48.00px;width:1.00px;height:572.00px;background:#3a3a3a"></div>
<div class="a" style="left:626.00px;top:48.00px;width:1.00px;height:572.00px;background:#3a3a3a"></div>
<div class="a" style="left:649.33px;top:48.00px;width:1.00px;height:572.00px;background:#3a3a3a"></div>
<div class="a" style="left:672.67px;top:48.00px;width:1.00px;height:572.00px;background:#3a3a3a"></div>
<div class="a" style="left:696.00px;top:48.00px;width:1.00px;height:572.00px;background:#3a3a3a"></div>
<div class="a" style="left:719.33px;top:48.00px;width:1.00px;height:572.00px;background:#3a3a3a"></div>
<div class="a" style="left:742.67px;top:48.00px;width:1.00px;height:572.00px;background:#3a3a3a"></div>
<div class="a" style="left:766.00px;top:48.00px;width:1.00px;height:572.00px;background:#3a3a3a"></div>
<div class="a" style="left:789.33px;top:48.00px;width:1.00px;height:572.00px;background:#3a3a3a"></div>
<div class="a" style="left:812.67px;top:48.00px;width:1.00px;height:572.00px;background:#3a3a3a"></div>
<div class="a" style="left:836.00px;top:48.00px;width:1.00px;height:572.00px;background:#3a3a3a"></div>
<div class="a" style="left:859.33px;top:48.00px;width:1.00px;height:572.00px;background:#3a3a3a"></div>
<div class="a" style="left:882.67px;top:48.00px;width:1.00px;height:572.00px;background:#3a3a3a"></div>
<div class="a" style="left:906.00px;top:48.00px;width:1.00px;height:572.00px;background:#3a3a3a"></div>
<div class="a" style="left:369.33px;top:85.76px;width:2.00px;height:534.24px;background:#2a4f9e"></div>
<div class="a" style="left:532.67px;top:85.76px;width:2.00px;height:534.24px;background:#d01c1c"></div>
<div class="a" style="left:696.00px;top:85.76px;width:2.00px;height:534.24px;background:#2f5d1f"></div>
<div class="t" style="left:-37.30px;width:120px;text-align:center;top:37.71px;font-size:9.2px;color:#222;font-weight:bold;">1</div>
<div class="t" style="left:-5.50px;width:120px;text-align:center;top:37.71px;font-size:9.2px;color:#222;font-weight:bold;">1</div>
<div class="t" style="left:25.50px;width:120px;text-align:center;top:37.71px;font-size:9.2px;color:#222;font-weight:bold;">2024</div>
<div class="a" style="left:11.00px;top:51.00px;width:24.00px;height:18.50px;background:#ececec;border-right:1.5px solid #555;border-bottom:1.5px solid #555"></div>
<div class="a" style="left:11.00px;top:59.30px;width:24.00px;height:1.00px;background:#555"></div>
<svg class="a" style="left:20.0px;top:53px" width="6" height="4" viewBox="0 0 6 4"><path d="M0.5 3.5L3 1l2.5 2.5z" fill="#111"/></svg>
<svg class="a" style="left:20.0px;top:62.5px" width="6" height="4" viewBox="0 0 6 4"><path d="M0.5 0.5L3 3l2.5-2.5z" fill="#111"/></svg>
<div class="a" style="left:43.00px;top:51.00px;width:22.00px;height:18.50px;background:#ececec;border-right:1.5px solid #555;border-bottom:1.5px solid #555"></div>
<div class="a" style="left:43.00px;top:59.30px;width:22.00px;height:1.00px;background:#555"></div>
<svg class="a" style="left:51.0px;top:53px" width="6" height="4" viewBox="0 0 6 4"><path d="M0.5 3.5L3 1l2.5 2.5z" fill="#111"/></svg>
<svg class="a" style="left:51.0px;top:62.5px" width="6" height="4" viewBox="0 0 6 4"><path d="M0.5 0.5L3 3l2.5-2.5z" fill="#111"/></svg>
<div class="a" style="left:75.00px;top:51.00px;width:23.50px;height:18.50px;background:#ececec;border-right:1.5px solid #555;border-bottom:1.5px solid #555"></div>
<div class="a" style="left:75.00px;top:59.30px;width:23.50px;height:1.00px;background:#555"></div>
<svg class="a" style="left:83.8px;top:53px" width="6" height="4" viewBox="0 0 6 4"><path d="M0.5 3.5L3 1l2.5 2.5z" fill="#111"/></svg>
<svg class="a" style="left:83.8px;top:62.5px" width="6" height="4" viewBox="0 0 6 4"><path d="M0.5 0.5L3 3l2.5-2.5z" fill="#111"/></svg>
<div class="t" style="left:93.80px;width:120px;text-align:center;top:47.80px;font-size:9.8px;color:#222;font-weight:bold;">1/01/2024</div>
<div class="t" style="left:-37.00px;width:120px;text-align:center;top:75.87px;font-size:8.3px;color:#111;font-weight:bold;">Type</div>
<div class="t" style="left:-5.50px;width:120px;text-align:center;top:75.87px;font-size:8.3px;color:#111;font-weight:bold;">PT/FT</div>
<div class="t" style="left:26.00px;width:120px;text-align:center;top:76.13px;font-size:8.0px;color:#111;font-weight:bold;">FTE</div>
<div class="t" style="left:94.00px;width:120px;text-align:center;top:75.64px;font-size:8.7px;color:#111;font-weight:bold;">Employee</div>
<div class="t" style="left:158.17px;width:120px;text-align:center;top:56.90px;font-size:9.1px;color:#111;font-weight:bold;">Mon</div>
<div class="t" style="left:158.17px;width:120px;text-align:center;top:74.84px;font-size:9.4px;color:#111;font-weight:bold;">1</div>
<div class="t" style="left:181.50px;width:120px;text-align:center;top:56.90px;font-size:9.1px;color:#111;font-weight:bold;">Tue</div>
<div class="t" style="left:181.50px;width:120px;text-align:center;top:74.84px;font-size:9.4px;color:#111;font-weight:bold;">2</div>
<div class="t" style="left:204.83px;width:120px;text-align:center;top:56.90px;font-size:9.1px;color:#111;font-weight:bold;">Wed</div>
<div class="t" style="left:204.83px;width:120px;text-align:center;top:74.84px;font-size:9.4px;color:#111;font-weight:bold;">3</div>
<div class="t" style="left:228.17px;width:120px;text-align:center;top:56.90px;font-size:9.1px;color:#111;font-weight:bold;">Thu</div>
<div class="t" style="left:228.17px;width:120px;text-align:center;top:74.84px;font-size:9.4px;color:#111;font-weight:bold;">4</div>
<div class="t" style="left:251.50px;width:120px;text-align:center;top:56.90px;font-size:9.1px;color:#111;font-weight:bold;">Fri</div>
<div class="t" style="left:251.50px;width:120px;text-align:center;top:74.84px;font-size:9.4px;color:#111;font-weight:bold;">5</div>
<div class="t" style="left:274.83px;width:120px;text-align:center;top:56.90px;font-size:9.1px;color:#111;font-weight:bold;">Sat</div>
<div class="t" style="left:274.83px;width:120px;text-align:center;top:74.84px;font-size:9.4px;color:#111;font-weight:bold;">6</div>
<div class="t" style="left:298.17px;width:120px;text-align:center;top:56.90px;font-size:9.1px;color:#111;font-weight:bold;">Sun</div>
<div class="t" style="left:298.17px;width:120px;text-align:center;top:74.84px;font-size:9.4px;color:#111;font-weight:bold;">7</div>
<div class="t" style="left:321.50px;width:120px;text-align:center;top:56.90px;font-size:9.1px;color:#111;font-weight:bold;">Mon</div>
<div class="t" style="left:321.50px;width:120px;text-align:center;top:74.84px;font-size:9.4px;color:#111;font-weight:bold;">8</div>
<div class="t" style="left:344.83px;width:120px;text-align:center;top:56.90px;font-size:9.1px;color:#111;font-weight:bold;">Tue</div>
<div class="t" style="left:344.83px;width:120px;text-align:center;top:74.84px;font-size:9.4px;color:#111;font-weight:bold;">9</div>
<div class="t" style="left:368.17px;width:120px;text-align:center;top:56.90px;font-size:9.1px;color:#111;font-weight:bold;">Wed</div>
<div class="t" style="left:368.17px;width:120px;text-align:center;top:74.84px;font-size:9.4px;color:#111;font-weight:bold;">10</div>
<div class="t" style="left:391.50px;width:120px;text-align:center;top:56.90px;font-size:9.1px;color:#111;font-weight:bold;">Thu</div>
<div class="t" style="left:391.50px;width:120px;text-align:center;top:74.84px;font-size:9.4px;color:#111;font-weight:bold;">11</div>
<div class="t" style="left:414.83px;width:120px;text-align:center;top:56.90px;font-size:9.1px;color:#111;font-weight:bold;">Fri</div>
<div class="t" style="left:414.83px;width:120px;text-align:center;top:74.84px;font-size:9.4px;color:#111;font-weight:bold;">12</div>
<div class="t" style="left:438.17px;width:120px;text-align:center;top:56.90px;font-size:9.1px;color:#111;font-weight:bold;">Sat</div>
<div class="t" style="left:438.17px;width:120px;text-align:center;top:74.84px;font-size:9.4px;color:#111;font-weight:bold;">13</div>
<div class="t" style="left:461.50px;width:120px;text-align:center;top:56.90px;font-size:9.1px;color:#111;font-weight:bold;">Sun</div>
<div class="t" style="left:461.50px;width:120px;text-align:center;top:74.84px;font-size:9.4px;color:#111;font-weight:bold;">14</div>
<div class="t" style="left:484.83px;width:120px;text-align:center;top:56.90px;font-size:9.1px;color:#111;font-weight:bold;">Mon</div>
<div class="t" style="left:484.83px;width:120px;text-align:center;top:74.84px;font-size:9.4px;color:#111;font-weight:bold;">15</div>
<div class="t" style="left:508.17px;width:120px;text-align:center;top:56.90px;font-size:9.1px;color:#111;font-weight:bold;">Tue</div>
<div class="t" style="left:508.17px;width:120px;text-align:center;top:74.84px;font-size:9.4px;color:#111;font-weight:bold;">16</div>
<div class="t" style="left:531.50px;width:120px;text-align:center;top:56.90px;font-size:9.1px;color:#111;font-weight:bold;">Wed</div>
<div class="t" style="left:531.50px;width:120px;text-align:center;top:74.84px;font-size:9.4px;color:#111;font-weight:bold;">17</div>
<div class="t" style="left:554.83px;width:120px;text-align:center;top:56.90px;font-size:9.1px;color:#111;font-weight:bold;">Thu</div>
<div class="t" style="left:554.83px;width:120px;text-align:center;top:74.84px;font-size:9.4px;color:#111;font-weight:bold;">18</div>
<div class="t" style="left:578.17px;width:120px;text-align:center;top:56.90px;font-size:9.1px;color:#111;font-weight:bold;">Fri</div>
<div class="t" style="left:578.17px;width:120px;text-align:center;top:74.84px;font-size:9.4px;color:#111;font-weight:bold;">19</div>
<div class="t" style="left:601.50px;width:120px;text-align:center;top:56.90px;font-size:9.1px;color:#111;font-weight:bold;">Sat</div>
<div class="t" style="left:601.50px;width:120px;text-align:center;top:74.84px;font-size:9.4px;color:#111;font-weight:bold;">20</div>
<div class="t" style="left:624.83px;width:120px;text-align:center;top:56.90px;font-size:9.1px;color:#111;font-weight:bold;">Sun</div>
<div class="t" style="left:624.83px;width:120px;text-align:center;top:74.84px;font-size:9.4px;color:#111;font-weight:bold;">21</div>
<div class="t" style="left:648.17px;width:120px;text-align:center;top:56.90px;font-size:9.1px;color:#111;font-weight:bold;">Mon</div>
<div class="t" style="left:648.17px;width:120px;text-align:center;top:74.84px;font-size:9.4px;color:#111;font-weight:bold;">22</div>
<div class="t" style="left:671.50px;width:120px;text-align:center;top:56.90px;font-size:9.1px;color:#111;font-weight:bold;">Tue</div>
<div class="t" style="left:671.50px;width:120px;text-align:center;top:74.84px;font-size:9.4px;color:#111;font-weight:bold;">23</div>
<div class="t" style="left:694.83px;width:120px;text-align:center;top:56.90px;font-size:9.1px;color:#111;font-weight:bold;">Wed</div>
<div class="t" style="left:694.83px;width:120px;text-align:center;top:74.84px;font-size:9.4px;color:#111;font-weight:bold;">24</div>
<div class="t" style="left:718.17px;width:120px;text-align:center;top:56.90px;font-size:9.1px;color:#111;font-weight:bold;">Thu</div>
<div class="t" style="left:718.17px;width:120px;text-align:center;top:74.84px;font-size:9.4px;color:#111;font-weight:bold;">25</div>
<div class="t" style="left:741.50px;width:120px;text-align:center;top:56.90px;font-size:9.1px;color:#111;font-weight:bold;">Fri</div>
<div class="t" style="left:741.50px;width:120px;text-align:center;top:74.84px;font-size:9.4px;color:#111;font-weight:bold;">26</div>
<div class="t" style="left:764.83px;width:120px;text-align:center;top:56.90px;font-size:9.1px;color:#111;font-weight:bold;">Sat</div>
<div class="t" style="left:764.83px;width:120px;text-align:center;top:74.84px;font-size:9.4px;color:#111;font-weight:bold;">27</div>
<div class="t" style="left:788.17px;width:120px;text-align:center;top:56.90px;font-size:9.1px;color:#111;font-weight:bold;">Sun</div>
<div class="t" style="left:788.17px;width:120px;text-align:center;top:74.84px;font-size:9.4px;color:#111;font-weight:bold;">28</div>
<div class="t" style="left:811.50px;width:120px;text-align:center;top:56.90px;font-size:9.1px;color:#111;font-weight:bold;">Mon</div>
<div class="t" style="left:811.50px;width:120px;text-align:center;top:74.84px;font-size:9.4px;color:#111;font-weight:bold;">29</div>
<div class="t" style="left:834.83px;width:120px;text-align:center;top:56.90px;font-size:9.1px;color:#111;font-weight:bold;">Tue</div>
<div class="t" style="left:834.83px;width:120px;text-align:center;top:74.84px;font-size:9.4px;color:#111;font-weight:bold;">30</div>
<div class="t" style="left:858.17px;width:120px;text-align:center;top:56.90px;font-size:9.1px;color:#111;font-weight:bold;">Wed</div>
<div class="t" style="left:858.17px;width:120px;text-align:center;top:74.84px;font-size:9.4px;color:#111;font-weight:bold;">31</div>
<div class="t n" style="left:103.80px;top:88.99px;font-size:9.3px;color:#1e1e1e;font-weight:normal;">Manager</div>
<div class="t" style="left:-37.00px;width:120px;text-align:center;top:90.26px;font-size:7.8px;color:#333;font-weight:bold;">MGR</div>
<div class="t n" style="left:103.80px;top:102.55px;font-size:9.3px;color:#1e1e1e;font-weight:normal;">Supervisor</div>
<div class="t" style="left:-37.00px;width:120px;text-align:center;top:103.82px;font-size:7.8px;color:#333;font-weight:bold;">SPV</div>
<div class="t n" style="left:103.80px;top:116.11px;font-size:9.3px;color:#1e1e1e;font-weight:normal;">Team Leader</div>
<div class="t" style="left:-37.00px;width:120px;text-align:center;top:117.38px;font-size:7.8px;color:#333;font-weight:bold;">TL</div>
<div class="t n" style="left:103.80px;top:129.67px;font-size:9.3px;color:#1e1e1e;font-weight:normal;">Employee 1</div>
<div class="t n" style="left:103.80px;top:143.23px;font-size:9.3px;color:#1e1e1e;font-weight:normal;">Employee 2</div>
<div class="t n" style="left:103.80px;top:156.79px;font-size:9.3px;color:#1e1e1e;font-weight:normal;">Employee 3</div>
<div class="t n" style="left:103.80px;top:170.35px;font-size:9.3px;color:#1e1e1e;font-weight:normal;">Employee 4</div>
<div class="t n" style="left:103.80px;top:183.91px;font-size:9.3px;color:#1e1e1e;font-weight:normal;">Employee 5</div>
<div class="t n" style="left:103.80px;top:197.47px;font-size:9.3px;color:#1e1e1e;font-weight:normal;">Employee 6</div>
<div class="t n" style="left:103.80px;top:211.03px;font-size:9.3px;color:#1e1e1e;font-weight:normal;">Employee 7</div>
<div class="t n" style="left:103.80px;top:224.59px;font-size:9.3px;color:#1e1e1e;font-weight:normal;">Employee 8</div>
<div class="t n" style="left:103.80px;top:238.15px;font-size:9.3px;color:#1e1e1e;font-weight:normal;">Employee 9</div>
<div class="t n" style="left:103.80px;top:251.71px;font-size:9.3px;color:#1e1e1e;font-weight:normal;">Employee 10</div>
<div class="t n" style="left:103.80px;top:265.27px;font-size:9.3px;color:#1e1e1e;font-weight:normal;">Employee 11</div>
<div class="t n" style="left:103.80px;top:278.83px;font-size:9.3px;color:#1e1e1e;font-weight:normal;">Employee 12</div>
<div class="t n" style="left:103.80px;top:292.39px;font-size:9.3px;color:#1e1e1e;font-weight:normal;">Employee 13</div>
<div class="t n" style="left:103.80px;top:305.95px;font-size:9.3px;color:#1e1e1e;font-weight:normal;">Employee 14</div>
<div class="t n" style="left:103.80px;top:319.51px;font-size:9.3px;color:#1e1e1e;font-weight:normal;">Employee 15</div>
<div class="t n" style="left:103.80px;top:333.07px;font-size:9.3px;color:#1e1e1e;font-weight:normal;">Employee 16</div>
<div class="t n" style="left:103.80px;top:346.63px;font-size:9.3px;color:#1e1e1e;font-weight:normal;">Employee 17</div>
<div class="t n" style="left:103.80px;top:360.19px;font-size:9.3px;color:#1e1e1e;font-weight:normal;">Employee 18</div>
<div class="t n" style="left:103.80px;top:373.75px;font-size:9.3px;color:#1e1e1e;font-weight:normal;">Employee 19</div>
<div class="t n" style="left:103.80px;top:387.31px;font-size:9.3px;color:#1e1e1e;font-weight:normal;">Employee 20</div>
<div class="t n" style="left:103.80px;top:400.87px;font-size:9.3px;color:#1e1e1e;font-weight:normal;">Employee 21</div>
<div class="t n" style="left:103.80px;top:414.43px;font-size:9.3px;color:#1e1e1e;font-weight:normal;">Employee 22</div>
<div class="t n" style="left:103.80px;top:427.99px;font-size:9.3px;color:#1e1e1e;font-weight:normal;">Employee 23</div>
<div class="t n" style="left:103.80px;top:441.55px;font-size:9.3px;color:#1e1e1e;font-weight:normal;">Employee 24</div>
<div class="t n" style="left:103.80px;top:455.11px;font-size:9.3px;color:#1e1e1e;font-weight:normal;">Employee 25</div>
<div class="t n" style="left:103.80px;top:468.67px;font-size:9.3px;color:#1e1e1e;font-weight:normal;">Employee 26</div>
<div class="t n" style="left:103.80px;top:482.23px;font-size:9.3px;color:#1e1e1e;font-weight:normal;">Employee 27</div>
<div class="t n" style="left:103.80px;top:495.79px;font-size:9.3px;color:#1e1e1e;font-weight:normal;">Employee 28</div>
<div class="t n" style="left:103.80px;top:509.35px;font-size:9.3px;color:#1e1e1e;font-weight:normal;">Employee 29</div>
<div class="t n" style="left:103.80px;top:522.91px;font-size:9.3px;color:#1e1e1e;font-weight:normal;">Employee 30</div>
<div class="t n" style="left:103.80px;top:536.47px;font-size:9.3px;color:#1e1e1e;font-weight:normal;">Employee 31</div>
<div class="t n" style="left:103.80px;top:550.03px;font-size:9.3px;color:#1e1e1e;font-weight:normal;">Employee 32</div>
<div class="t n" style="left:103.80px;top:563.59px;font-size:9.3px;color:#1e1e1e;font-weight:normal;">Employee 33</div>
<div class="t n" style="left:103.80px;top:577.15px;font-size:9.3px;color:#1e1e1e;font-weight:normal;">Employee 34</div>
<div class="t n" style="left:103.80px;top:590.71px;font-size:9.3px;color:#1e1e1e;font-weight:normal;">Employee 35</div>
<div class="t n" style="left:103.80px;top:604.27px;font-size:9.3px;color:#1e1e1e;font-weight:normal;">Employee 36</div>
<div class="t n" style="left:103.80px;top:617.83px;font-size:9.3px;color:#1e1e1e;font-weight:normal;">Employee 37</div>
<div class="a" style="left:936.50px;top:9.00px;width:92.00px;height:29.50px;background:#efefef;border-right:1.5px solid #6a6a6a;border-bottom:1.5px solid #6a6a6a;border-top:1px solid #e4e4e4;border-left:1px solid #e4e4e4"></div>
<div class="t" style="left:922.00px;width:120px;text-align:center;top:18.76px;font-size:10.8px;color:#111;font-weight:bold;">Clear Content</div>
<div class="a" style="left:1044.80px;top:9.00px;width:90.90px;height:29.50px;background:#efefef;border-right:1.5px solid #6a6a6a;border-bottom:1.5px solid #6a6a6a;border-top:1px solid #e4e4e4;border-left:1px solid #e4e4e4"></div>
<div class="t" style="left:1029.50px;width:120px;text-align:center;top:18.76px;font-size:10.8px;color:#111;font-weight:bold;">Duplicate</div>
<div class="t" style="left:1159.40px;top:14.93px;font-size:15.2px;color:#0b5fcc;font-weight:bold;text-decoration:underline;text-underline-offset:0px;text-decoration-thickness:1px;text-decoration-color:#4a86d8">Instructions</div>
<div class="a" style="left:937.50px;top:48.50px;width:22.00px;height:571.50px;background:#c3eefa"></div>
<div class="t" style="left:908.50px;top:82px;width:80px;height:10px;text-align:center;font-size:8.4px;color:#222;transform:rotate(90deg);line-height:10px">Total nights</div>
<div class="a" style="left:960.00px;top:48.50px;width:23.50px;height:571.50px;background:#9fdff2"></div>
<div class="t" style="left:931.75px;top:82px;width:80px;height:10px;text-align:center;font-size:8.4px;color:#222;transform:rotate(90deg);line-height:10px">1st Fortnight hrs</div>
<div class="a" style="left:984.00px;top:48.50px;width:23.50px;height:571.50px;background:#9fd2e2"></div>
<div class="t" style="left:955.75px;top:82px;width:80px;height:10px;text-align:center;font-size:8.4px;color:#222;transform:rotate(90deg);line-height:10px">Total Hours</div>
<div class="a" style="left:937.50px;top:125.94px;width:70.00px;height:1.00px;background:#fff"></div>
<div class="a" style="left:959.00px;top:48.50px;width:1.00px;height:571.50px;background:#fff"></div>
<div class="a" style="left:983.00px;top:48.50px;width:1.00px;height:571.50px;background:#fff"></div>
<div class="a" style="left:937.50px;top:139.50px;width:70.00px;height:1.00px;background:#fff"></div>
<div class="a" style="left:937.50px;top:153.06px;width:70.00px;height:1.00px;background:#fff"></div>
<div class="a" style="left:937.50px;top:166.62px;width:70.00px;height:1.00px;background:#fff"></div>
<div class="a" style="left:937.50px;top:180.18px;width:70.00px;height:1.00px;background:#fff"></div>
<div class="a" style="left:937.50px;top:193.74px;width:70.00px;height:1.00px;background:#fff"></div>
<div class="a" style="left:937.50px;top:207.30px;width:70.00px;height:1.00px;background:#fff"></div>
<div class="a" style="left:937.50px;top:220.86px;width:70.00px;height:1.00px;background:#fff"></div>
<div class="a" style="left:937.50px;top:234.42px;width:70.00px;height:1.00px;background:#fff"></div>
<div class="a" style="left:937.50px;top:247.98px;width:70.00px;height:1.00px;background:#fff"></div>
<div class="a" style="left:937.50px;top:261.54px;width:70.00px;height:1.00px;background:#fff"></div>
<div class="a" style="left:937.50px;top:275.10px;width:70.00px;height:1.00px;background:#fff"></div>
<div class="a" style="left:937.50px;top:288.66px;width:70.00px;height:1.00px;background:#fff"></div>
<div class="a" style="left:937.50px;top:302.22px;width:70.00px;height:1.00px;background:#fff"></div>
<div class="a" style="left:937.50px;top:315.78px;width:70.00px;height:1.00px;background:#fff"></div>
<div class="a" style="left:937.50px;top:329.34px;width:70.00px;height:1.00px;background:#fff"></div>
<div class="a" style="left:937.50px;top:342.90px;width:70.00px;height:1.00px;background:#fff"></div>
<div class="a" style="left:937.50px;top:356.46px;width:70.00px;height:1.00px;background:#fff"></div>
<div class="a" style="left:937.50px;top:370.02px;width:70.00px;height:1.00px;background:#fff"></div>
<div class="a" style="left:937.50px;top:383.58px;width:70.00px;height:1.00px;background:#fff"></div>
<div class="a" style="left:937.50px;top:397.14px;width:70.00px;height:1.00px;background:#fff"></div>
<div class="a" style="left:937.50px;top:410.70px;width:70.00px;height:1.00px;background:#fff"></div>
<div class="a" style="left:937.50px;top:424.26px;width:70.00px;height:1.00px;background:#fff"></div>
<div class="a" style="left:937.50px;top:437.82px;width:70.00px;height:1.00px;background:#fff"></div>
<div class="a" style="left:937.50px;top:451.38px;width:70.00px;height:1.00px;background:#fff"></div>
<div class="a" style="left:937.50px;top:464.94px;width:70.00px;height:1.00px;background:#fff"></div>
<div class="a" style="left:937.50px;top:478.50px;width:70.00px;height:1.00px;background:#fff"></div>
<div class="a" style="left:937.50px;top:492.06px;width:70.00px;height:1.00px;background:#fff"></div>
<div class="a" style="left:937.50px;top:505.62px;width:70.00px;height:1.00px;background:#fff"></div>
<div class="a" style="left:937.50px;top:519.18px;width:70.00px;height:1.00px;background:#fff"></div>
<div class="a" style="left:937.50px;top:532.74px;width:70.00px;height:1.00px;background:#fff"></div>
<div class="a" style="left:937.50px;top:546.30px;width:70.00px;height:1.00px;background:#fff"></div>
<div class="a" style="left:937.50px;top:559.86px;width:70.00px;height:1.00px;background:#fff"></div>
<div class="a" style="left:937.50px;top:573.42px;width:70.00px;height:1.00px;background:#fff"></div>
<div class="a" style="left:937.50px;top:586.98px;width:70.00px;height:1.00px;background:#fff"></div>
<div class="a" style="left:937.50px;top:600.54px;width:70.00px;height:1.00px;background:#fff"></div>
<div class="a" style="left:937.50px;top:614.10px;width:70.00px;height:1.00px;background:#fff"></div>
<div class="a" style="left:937.50px;top:627.66px;width:70.00px;height:1.00px;background:#fff"></div>
<div class="t n" style="left:888.50px;width:120px;text-align:center;top:129.59px;font-size:8.8px;color:#262626;font-weight:normal;">0</div>
<div class="t n" style="left:911.75px;width:120px;text-align:center;top:129.59px;font-size:8.8px;color:#262626;font-weight:normal;">0</div>
<div class="t n" style="left:935.75px;width:120px;text-align:center;top:129.59px;font-size:8.8px;color:#262626;font-weight:normal;">0</div>
<div class="t n" style="left:888.50px;width:120px;text-align:center;top:143.15px;font-size:8.8px;color:#262626;font-weight:normal;">0</div>
<div class="t n" style="left:911.75px;width:120px;text-align:center;top:143.15px;font-size:8.8px;color:#262626;font-weight:normal;">0</div>
<div class="t n" style="left:935.75px;width:120px;text-align:center;top:143.15px;font-size:8.8px;color:#262626;font-weight:normal;">0</div>
<div class="t n" style="left:888.50px;width:120px;text-align:center;top:156.71px;font-size:8.8px;color:#262626;font-weight:normal;">0</div>
<div class="t n" style="left:911.75px;width:120px;text-align:center;top:156.71px;font-size:8.8px;color:#262626;font-weight:normal;">0</div>
<div class="t n" style="left:935.75px;width:120px;text-align:center;top:156.71px;font-size:8.8px;color:#262626;font-weight:normal;">0</div>
<div class="t n" style="left:888.50px;width:120px;text-align:center;top:170.27px;font-size:8.8px;color:#262626;font-weight:normal;">0</div>
<div class="t n" style="left:911.75px;width:120px;text-align:center;top:170.27px;font-size:8.8px;color:#262626;font-weight:normal;">0</div>
<div class="t n" style="left:935.75px;width:120px;text-align:center;top:170.27px;font-size:8.8px;color:#262626;font-weight:normal;">0</div>
<div class="t n" style="left:888.50px;width:120px;text-align:center;top:183.83px;font-size:8.8px;color:#262626;font-weight:normal;">0</div>
<div class="t n" style="left:911.75px;width:120px;text-align:center;top:183.83px;font-size:8.8px;color:#262626;font-weight:normal;">0</div>
<div class="t n" style="left:935.75px;width:120px;text-align:center;top:183.83px;font-size:8.8px;color:#262626;font-weight:normal;">0</div>
<div class="t n" style="left:888.50px;width:120px;text-align:center;top:197.39px;font-size:8.8px;color:#262626;font-weight:normal;">0</div>
<div class="t n" style="left:911.75px;width:120px;text-align:center;top:197.39px;font-size:8.8px;color:#262626;font-weight:normal;">0</div>
<div class="t n" style="left:935.75px;width:120px;text-align:center;top:197.39px;font-size:8.8px;color:#262626;font-weight:normal;">0</div>
<div class="t n" style="left:888.50px;width:120px;text-align:center;top:210.95px;font-size:8.8px;color:#262626;font-weight:normal;">0</div>
<div class="t n" style="left:911.75px;width:120px;text-align:center;top:210.95px;font-size:8.8px;color:#262626;font-weight:normal;">0</div>
<div class="t n" style="left:935.75px;width:120px;text-align:center;top:210.95px;font-size:8.8px;color:#262626;font-weight:normal;">0</div>
<div class="t n" style="left:888.50px;width:120px;text-align:center;top:224.51px;font-size:8.8px;color:#262626;font-weight:normal;">0</div>
<div class="t n" style="left:911.75px;width:120px;text-align:center;top:224.51px;font-size:8.8px;color:#262626;font-weight:normal;">0</div>
<div class="t n" style="left:935.75px;width:120px;text-align:center;top:224.51px;font-size:8.8px;color:#262626;font-weight:normal;">0</div>
<div class="t n" style="left:888.50px;width:120px;text-align:center;top:238.07px;font-size:8.8px;color:#262626;font-weight:normal;">0</div>
<div class="t n" style="left:911.75px;width:120px;text-align:center;top:238.07px;font-size:8.8px;color:#262626;font-weight:normal;">0</div>
<div class="t n" style="left:935.75px;width:120px;text-align:center;top:238.07px;font-size:8.8px;color:#262626;font-weight:normal;">0</div>
<div class="t n" style="left:888.50px;width:120px;text-align:center;top:251.63px;font-size:8.8px;color:#262626;font-weight:normal;">0</div>
<div class="t n" style="left:911.75px;width:120px;text-align:center;top:251.63px;font-size:8.8px;color:#262626;font-weight:normal;">0</div>
<div class="t n" style="left:935.75px;width:120px;text-align:center;top:251.63px;font-size:8.8px;color:#262626;font-weight:normal;">0</div>
<div class="t n" style="left:888.50px;width:120px;text-align:center;top:265.19px;font-size:8.8px;color:#262626;font-weight:normal;">0</div>
<div class="t n" style="left:911.75px;width:120px;text-align:center;top:265.19px;font-size:8.8px;color:#262626;font-weight:normal;">0</div>
<div class="t n" style="left:935.75px;width:120px;text-align:center;top:265.19px;font-size:8.8px;color:#262626;font-weight:normal;">0</div>
<div class="t n" style="left:888.50px;width:120px;text-align:center;top:278.75px;font-size:8.8px;color:#262626;font-weight:normal;">0</div>
<div class="t n" style="left:911.75px;width:120px;text-align:center;top:278.75px;font-size:8.8px;color:#262626;font-weight:normal;">0</div>
<div class="t n" style="left:935.75px;width:120px;text-align:center;top:278.75px;font-size:8.8px;color:#262626;font-weight:normal;">0</div>
<div class="t n" style="left:888.50px;width:120px;text-align:center;top:292.31px;font-size:8.8px;color:#262626;font-weight:normal;">0</div>
<div class="t n" style="left:911.75px;width:120px;text-align:center;top:292.31px;font-size:8.8px;color:#262626;font-weight:normal;">0</div>
<div class="t n" style="left:935.75px;width:120px;text-align:center;top:292.31px;font-size:8.8px;color:#262626;font-weight:normal;">0</div>
<div class="t n" style="left:888.50px;width:120px;text-align:center;top:305.87px;font-size:8.8px;color:#262626;font-weight:normal;">0</div>
<div class="t n" style="left:911.75px;width:120px;text-align:center;top:305.87px;font-size:8.8px;color:#262626;font-weight:normal;">0</div>
<div class="t n" style="left:935.75px;width:120px;text-align:center;top:305.87px;font-size:8.8px;color:#262626;font-weight:normal;">0</div>
<div class="t n" style="left:888.50px;width:120px;text-align:center;top:319.43px;font-size:8.8px;color:#262626;font-weight:normal;">0</div>
<div class="t n" style="left:911.75px;width:120px;text-align:center;top:319.43px;font-size:8.8px;color:#262626;font-weight:normal;">0</div>
<div class="t n" style="left:935.75px;width:120px;text-align:center;top:319.43px;font-size:8.8px;color:#262626;font-weight:normal;">0</div>
<div class="t n" style="left:888.50px;width:120px;text-align:center;top:332.99px;font-size:8.8px;color:#262626;font-weight:normal;">0</div>
<div class="t n" style="left:911.75px;width:120px;text-align:center;top:332.99px;font-size:8.8px;color:#262626;font-weight:normal;">0</div>
<div class="t n" style="left:935.75px;width:120px;text-align:center;top:332.99px;font-size:8.8px;color:#262626;font-weight:normal;">0</div>
<div class="t n" style="left:888.50px;width:120px;text-align:center;top:346.55px;font-size:8.8px;color:#262626;font-weight:normal;">0</div>
<div class="t n" style="left:911.75px;width:120px;text-align:center;top:346.55px;font-size:8.8px;color:#262626;font-weight:normal;">0</div>
<div class="t n" style="left:935.75px;width:120px;text-align:center;top:346.55px;font-size:8.8px;color:#262626;font-weight:normal;">0</div>
<div class="t n" style="left:888.50px;width:120px;text-align:center;top:360.11px;font-size:8.8px;color:#262626;font-weight:normal;">0</div>
<div class="t n" style="left:911.75px;width:120px;text-align:center;top:360.11px;font-size:8.8px;color:#262626;font-weight:normal;">0</div>
<div class="t n" style="left:935.75px;width:120px;text-align:center;top:360.11px;font-size:8.8px;color:#262626;font-weight:normal;">0</div>
<div class="t n" style="left:888.50px;width:120px;text-align:center;top:373.67px;font-size:8.8px;color:#262626;font-weight:normal;">0</div>
<div class="t n" style="left:911.75px;width:120px;text-align:center;top:373.67px;font-size:8.8px;color:#262626;font-weight:normal;">0</div>
<div class="t n" style="left:935.75px;width:120px;text-align:center;top:373.67px;font-size:8.8px;color:#262626;font-weight:normal;">0</div>
<div class="t n" style="left:888.50px;width:120px;text-align:center;top:387.23px;font-size:8.8px;color:#262626;font-weight:normal;">0</div>
<div class="t n" style="left:911.75px;width:120px;text-align:center;top:387.23px;font-size:8.8px;color:#262626;font-weight:normal;">0</div>
<div class="t n" style="left:935.75px;width:120px;text-align:center;top:387.23px;font-size:8.8px;color:#262626;font-weight:normal;">0</div>
<div class="t n" style="left:888.50px;width:120px;text-align:center;top:400.79px;font-size:8.8px;color:#262626;font-weight:normal;">0</div>
<div class="t n" style="left:911.75px;width:120px;text-align:center;top:400.79px;font-size:8.8px;color:#262626;font-weight:normal;">0</div>
<div class="t n" style="left:935.75px;width:120px;text-align:center;top:400.79px;font-size:8.8px;color:#262626;font-weight:normal;">0</div>
<div class="t n" style="left:888.50px;width:120px;text-align:center;top:414.35px;font-size:8.8px;color:#262626;font-weight:normal;">0</div>
<div class="t n" style="left:911.75px;width:120px;text-align:center;top:414.35px;font-size:8.8px;color:#262626;font-weight:normal;">0</div>
<div class="t n" style="left:935.75px;width:120px;text-align:center;top:414.35px;font-size:8.8px;color:#262626;font-weight:normal;">0</div>
<div class="t n" style="left:888.50px;width:120px;text-align:center;top:427.91px;font-size:8.8px;color:#262626;font-weight:normal;">0</div>
<div class="t n" style="left:911.75px;width:120px;text-align:center;top:427.91px;font-size:8.8px;color:#262626;font-weight:normal;">0</div>
<div class="t n" style="left:935.75px;width:120px;text-align:center;top:427.91px;font-size:8.8px;color:#262626;font-weight:normal;">0</div>
<div class="t n" style="left:888.50px;width:120px;text-align:center;top:441.47px;font-size:8.8px;color:#262626;font-weight:normal;">0</div>
<div class="t n" style="left:911.75px;width:120px;text-align:center;top:441.47px;font-size:8.8px;color:#262626;font-weight:normal;">0</div>
<div class="t n" style="left:935.75px;width:120px;text-align:center;top:441.47px;font-size:8.8px;color:#262626;font-weight:normal;">0</div>
<div class="t n" style="left:888.50px;width:120px;text-align:center;top:455.03px;font-size:8.8px;color:#262626;font-weight:normal;">0</div>
<div class="t n" style="left:911.75px;width:120px;text-align:center;top:455.03px;font-size:8.8px;color:#262626;font-weight:normal;">0</div>
<div class="t n" style="left:935.75px;width:120px;text-align:center;top:455.03px;font-size:8.8px;color:#262626;font-weight:normal;">0</div>
<div class="t n" style="left:888.50px;width:120px;text-align:center;top:468.59px;font-size:8.8px;color:#262626;font-weight:normal;">0</div>
<div class="t n" style="left:911.75px;width:120px;text-align:center;top:468.59px;font-size:8.8px;color:#262626;font-weight:normal;">0</div>
<div class="t n" style="left:935.75px;width:120px;text-align:center;top:468.59px;font-size:8.8px;color:#262626;font-weight:normal;">0</div>
<div class="t n" style="left:888.50px;width:120px;text-align:center;top:482.15px;font-size:8.8px;color:#262626;font-weight:normal;">0</div>
<div class="t n" style="left:911.75px;width:120px;text-align:center;top:482.15px;font-size:8.8px;color:#262626;font-weight:normal;">0</div>
<div class="t n" style="left:935.75px;width:120px;text-align:center;top:482.15px;font-size:8.8px;color:#262626;font-weight:normal;">0</div>
<div class="t n" style="left:888.50px;width:120px;text-align:center;top:495.71px;font-size:8.8px;color:#262626;font-weight:normal;">0</div>
<div class="t n" style="left:911.75px;width:120px;text-align:center;top:495.71px;font-size:8.8px;color:#262626;font-weight:normal;">0</div>
<div class="t n" style="left:935.75px;width:120px;text-align:center;top:495.71px;font-size:8.8px;color:#262626;font-weight:normal;">0</div>
<div class="t n" style="left:888.50px;width:120px;text-align:center;top:509.27px;font-size:8.8px;color:#262626;font-weight:normal;">0</div>
<div class="t n" style="left:911.75px;width:120px;text-align:center;top:509.27px;font-size:8.8px;color:#262626;font-weight:normal;">0</div>
<div class="t n" style="left:935.75px;width:120px;text-align:center;top:509.27px;font-size:8.8px;color:#262626;font-weight:normal;">0</div>
<div class="t n" style="left:888.50px;width:120px;text-align:center;top:522.83px;font-size:8.8px;color:#262626;font-weight:normal;">0</div>
<div class="t n" style="left:911.75px;width:120px;text-align:center;top:522.83px;font-size:8.8px;color:#262626;font-weight:normal;">0</div>
<div class="t n" style="left:935.75px;width:120px;text-align:center;top:522.83px;font-size:8.8px;color:#262626;font-weight:normal;">0</div>
<div class="t n" style="left:888.50px;width:120px;text-align:center;top:536.39px;font-size:8.8px;color:#262626;font-weight:normal;">0</div>
<div class="t n" style="left:911.75px;width:120px;text-align:center;top:536.39px;font-size:8.8px;color:#262626;font-weight:normal;">0</div>
<div class="t n" style="left:935.75px;width:120px;text-align:center;top:536.39px;font-size:8.8px;color:#262626;font-weight:normal;">0</div>
<div class="t n" style="left:888.50px;width:120px;text-align:center;top:549.95px;font-size:8.8px;color:#262626;font-weight:normal;">0</div>
<div class="t n" style="left:911.75px;width:120px;text-align:center;top:549.95px;font-size:8.8px;color:#262626;font-weight:normal;">0</div>
<div class="t n" style="left:935.75px;width:120px;text-align:center;top:549.95px;font-size:8.8px;color:#262626;font-weight:normal;">0</div>
<div class="t n" style="left:888.50px;width:120px;text-align:center;top:563.51px;font-size:8.8px;color:#262626;font-weight:normal;">0</div>
<div class="t n" style="left:911.75px;width:120px;text-align:center;top:563.51px;font-size:8.8px;color:#262626;font-weight:normal;">0</div>
<div class="t n" style="left:935.75px;width:120px;text-align:center;top:563.51px;font-size:8.8px;color:#262626;font-weight:normal;">0</div>
<div class="t n" style="left:888.50px;width:120px;text-align:center;top:577.07px;font-size:8.8px;color:#262626;font-weight:normal;">0</div>
<div class="t n" style="left:911.75px;width:120px;text-align:center;top:577.07px;font-size:8.8px;color:#262626;font-weight:normal;">0</div>
<div class="t n" style="left:935.75px;width:120px;text-align:center;top:577.07px;font-size:8.8px;color:#262626;font-weight:normal;">0</div>
<div class="t n" style="left:888.50px;width:120px;text-align:center;top:590.63px;font-size:8.8px;color:#262626;font-weight:normal;">0</div>
<div class="t n" style="left:911.75px;width:120px;text-align:center;top:590.63px;font-size:8.8px;color:#262626;font-weight:normal;">0</div>
<div class="t n" style="left:935.75px;width:120px;text-align:center;top:590.63px;font-size:8.8px;color:#262626;font-weight:normal;">0</div>
<div class="t n" style="left:888.50px;width:120px;text-align:center;top:604.19px;font-size:8.8px;color:#262626;font-weight:normal;">0</div>
<div class="t n" style="left:911.75px;width:120px;text-align:center;top:604.19px;font-size:8.8px;color:#262626;font-weight:normal;">0</div>
<div class="t n" style="left:935.75px;width:120px;text-align:center;top:604.19px;font-size:8.8px;color:#262626;font-weight:normal;">0</div>
<div class="t n" style="left:888.50px;width:120px;text-align:center;top:617.75px;font-size:8.8px;color:#262626;font-weight:normal;">0</div>
<div class="t n" style="left:911.75px;width:120px;text-align:center;top:617.75px;font-size:8.8px;color:#262626;font-weight:normal;">0</div>
<div class="t n" style="left:935.75px;width:120px;text-align:center;top:617.75px;font-size:8.8px;color:#262626;font-weight:normal;">0</div>
<div class="a" style="left:1016.00px;top:48.50px;width:112.00px;height:23.50px;background:#00f0d2"></div>
<div class="t" style="left:1012.00px;width:120px;text-align:center;top:56.74px;font-size:8.1px;color:#111;font-weight:bold;letter-spacing:-0.2px">Non-Productive</div>
<div class="a" style="left:1016.00px;top:72.50px;width:22.00px;height:13.30px;background:#ffd93d"></div>
<div class="t" style="left:967.00px;width:120px;text-align:center;top:75.22px;font-size:8.6px;color:#111;font-weight:bold;letter-spacing:-0.2px">ADO</div>
<div class="a" style="left:1038.50px;top:72.50px;width:22.00px;height:13.30px;background:#16b4f2"></div>
<div class="t" style="left:989.50px;width:120px;text-align:center;top:75.22px;font-size:8.6px;color:#fff;font-weight:bold;letter-spacing:-0.2px">AL</div>
<div class="a" style="left:1061.00px;top:72.50px;width:22.50px;height:13.30px;background:#ea5cab"></div>
<div class="t" style="left:1012.25px;width:120px;text-align:center;top:75.22px;font-size:8.6px;color:#fff;font-weight:bold;letter-spacing:-0.2px">ML</div>
<div class="a" style="left:1084.00px;top:72.50px;width:22.00px;height:13.30px;background:#00f0d2"></div>
<div class="t" style="left:1035.00px;width:120px;text-align:center;top:75.22px;font-size:8.6px;color:#111;font-weight:bold;letter-spacing:-0.2px">EL</div>
<div class="a" style="left:1106.50px;top:72.50px;width:21.50px;height:13.30px;background:#9a60e0"></div>
<div class="t" style="left:1057.25px;width:120px;text-align:center;top:75.22px;font-size:8.6px;color:#fff;font-weight:bold;letter-spacing:-0.2px">LSL</div>
<div class="a" style="left:1016.00px;top:85.76px;width:112.00px;height:534.24px;background:#cde8f4"></div>
<div class="a" style="left:1016.00px;top:85.26px;width:112.00px;height:1.00px;background:#fff"></div>
<div class="a" style="left:1016.00px;top:98.82px;width:112.00px;height:1.00px;background:#fff"></div>
<div class="a" style="left:1016.00px;top:112.38px;width:112.00px;height:1.00px;background:#fff"></div>
<div class="a" style="left:1016.00px;top:125.94px;width:112.00px;height:1.00px;background:#fff"></div>
<div class="a" style="left:1016.00px;top:139.50px;width:112.00px;height:1.00px;background:#fff"></div>
<div class="a" style="left:1016.00px;top:153.06px;width:112.00px;height:1.00px;background:#fff"></div>
<div class="a" style="left:1016.00px;top:166.62px;width:112.00px;height:1.00px;background:#fff"></div>
<div class="a" style="left:1016.00px;top:180.18px;width:112.00px;height:1.00px;background:#fff"></div>
<div class="a" style="left:1016.00px;top:193.74px;width:112.00px;height:1.00px;background:#fff"></div>
<div class="a" style="left:1016.00px;top:207.30px;width:112.00px;height:1.00px;background:#fff"></div>
<div class="a" style="left:1016.00px;top:220.86px;width:112.00px;height:1.00px;background:#fff"></div>
<div class="a" style="left:1016.00px;top:234.42px;width:112.00px;height:1.00px;background:#fff"></div>
<div class="a" style="left:1016.00px;top:247.98px;width:112.00px;height:1.00px;background:#fff"></div>
<div class="a" style="left:1016.00px;top:261.54px;width:112.00px;height:1.00px;background:#fff"></div>
<div class="a" style="left:1016.00px;top:275.10px;width:112.00px;height:1.00px;background:#fff"></div>
<div class="a" style="left:1016.00px;top:288.66px;width:112.00px;height:1.00px;background:#fff"></div>
<div class="a" style="left:1016.00px;top:302.22px;width:112.00px;height:1.00px;background:#fff"></div>
<div class="a" style="left:1016.00px;top:315.78px;width:112.00px;height:1.00px;background:#fff"></div>
<div class="a" style="left:1016.00px;top:329.34px;width:112.00px;height:1.00px;background:#fff"></div>
<div class="a" style="left:1016.00px;top:342.90px;width:112.00px;height:1.00px;background:#fff"></div>
<div class="a" style="left:1016.00px;top:356.46px;width:112.00px;height:1.00px;background:#fff"></div>
<div class="a" style="left:1016.00px;top:370.02px;width:112.00px;height:1.00px;background:#fff"></div>
<div class="a" style="left:1016.00px;top:383.58px;width:112.00px;height:1.00px;background:#fff"></div>
<div class="a" style="left:1016.00px;top:397.14px;width:112.00px;height:1.00px;background:#fff"></div>
<div class="a" style="left:1016.00px;top:410.70px;width:112.00px;height:1.00px;background:#fff"></div>
<div class="a" style="left:1016.00px;top:424.26px;width:112.00px;height:1.00px;background:#fff"></div>
<div class="a" style="left:1016.00px;top:437.82px;width:112.00px;height:1.00px;background:#fff"></div>
<div class="a" style="left:1016.00px;top:451.38px;width:112.00px;height:1.00px;background:#fff"></div>
<div class="a" style="left:1016.00px;top:464.94px;width:112.00px;height:1.00px;background:#fff"></div>
<div class="a" style="left:1016.00px;top:478.50px;width:112.00px;height:1.00px;background:#fff"></div>
<div class="a" style="left:1016.00px;top:492.06px;width:112.00px;height:1.00px;background:#fff"></div>
<div class="a" style="left:1016.00px;top:505.62px;width:112.00px;height:1.00px;background:#fff"></div>
<div class="a" style="left:1016.00px;top:519.18px;width:112.00px;height:1.00px;background:#fff"></div>
<div class="a" style="left:1016.00px;top:532.74px;width:112.00px;height:1.00px;background:#fff"></div>
<div class="a" style="left:1016.00px;top:546.30px;width:112.00px;height:1.00px;background:#fff"></div>
<div class="a" style="left:1016.00px;top:559.86px;width:112.00px;height:1.00px;background:#fff"></div>
<div class="a" style="left:1016.00px;top:573.42px;width:112.00px;height:1.00px;background:#fff"></div>
<div class="a" style="left:1016.00px;top:586.98px;width:112.00px;height:1.00px;background:#fff"></div>
<div class="a" style="left:1016.00px;top:600.54px;width:112.00px;height:1.00px;background:#fff"></div>
<div class="a" style="left:1016.00px;top:614.10px;width:112.00px;height:1.00px;background:#fff"></div>
<div class="a" style="left:1016.00px;top:627.66px;width:112.00px;height:1.00px;background:#fff"></div>
<div class="a" style="left:1038.00px;top:85.76px;width:1.00px;height:534.24px;background:#fff"></div>
<div class="a" style="left:1060.00px;top:85.76px;width:1.00px;height:534.24px;background:#fff"></div>
<div class="a" style="left:1084.00px;top:85.76px;width:1.00px;height:534.24px;background:#fff"></div>
<div class="a" style="left:1106.00px;top:85.76px;width:1.00px;height:534.24px;background:#fff"></div>
<div class="t n" style="left:967.00px;width:120px;text-align:center;top:88.91px;font-size:8.8px;color:#262626;font-weight:normal;">0</div>
<div class="t n" style="left:989.50px;width:120px;text-align:center;top:88.91px;font-size:8.8px;color:#262626;font-weight:normal;">0</div>
<div class="t n" style="left:1012.25px;width:120px;text-align:center;top:88.91px;font-size:8.8px;color:#262626;font-weight:normal;">0</div>
<div class="t n" style="left:1035.00px;width:120px;text-align:center;top:88.91px;font-size:8.8px;color:#262626;font-weight:normal;">0</div>
<div class="t n" style="left:1057.25px;width:120px;text-align:center;top:88.91px;font-size:8.8px;color:#262626;font-weight:normal;">0</div>
<div class="t n" style="left:967.00px;width:120px;text-align:center;top:102.47px;font-size:8.8px;color:#262626;font-weight:normal;">0</div>
<div class="t n" style="left:989.50px;width:120px;text-align:center;top:102.47px;font-size:8.8px;color:#262626;font-weight:normal;">0</div>
<div class="t n" style="left:1012.25px;width:120px;text-align:center;top:102.47px;font-size:8.8px;color:#262626;font-weight:normal;">0</div>
<div class="t n" style="left:1035.00px;width:120px;text-align:center;top:102.47px;font-size:8.8px;color:#262626;font-weight:normal;">0</div>
<div class="t n" style="left:1057.25px;width:120px;text-align:center;top:102.47px;font-size:8.8px;color:#262626;font-weight:normal;">0</div>
<div class="t n" style="left:967.00px;width:120px;text-align:center;top:116.03px;font-size:8.8px;color:#262626;font-weight:normal;">0</div>
<div class="t n" style="left:989.50px;width:120px;text-align:center;top:116.03px;font-size:8.8px;color:#262626;font-weight:normal;">0</div>
<div class="t n" style="left:1012.25px;width:120px;text-align:center;top:116.03px;font-size:8.8px;color:#262626;font-weight:normal;">0</div>
<div class="t n" style="left:1035.00px;width:120px;text-align:center;top:116.03px;font-size:8.8px;color:#262626;font-weight:normal;">0</div>
<div class="t n" style="left:1057.25px;width:120px;text-align:center;top:116.03px;font-size:8.8px;color:#262626;font-weight:normal;">0</div>
<div class="t n" style="left:967.00px;width:120px;text-align:center;top:129.59px;font-size:8.8px;color:#262626;font-weight:normal;">0</div>
<div class="t n" style="left:989.50px;width:120px;text-align:center;top:129.59px;font-size:8.8px;color:#262626;font-weight:normal;">0</div>
<div class="t n" style="left:1012.25px;width:120px;text-align:center;top:129.59px;font-size:8.8px;color:#262626;font-weight:normal;">0</div>
<div class="t n" style="left:1035.00px;width:120px;text-align:center;top:129.59px;font-size:8.8px;color:#262626;font-weight:normal;">0</div>
<div class="t n" style="left:1057.25px;width:120px;text-align:center;top:129.59px;font-size:8.8px;color:#262626;font-weight:normal;">0</div>
<div class="t n" style="left:967.00px;width:120px;text-align:center;top:143.15px;font-size:8.8px;color:#262626;font-weight:normal;">0</div>
<div class="t n" style="left:989.50px;width:120px;text-align:center;top:143.15px;font-size:8.8px;color:#262626;font-weight:normal;">0</div>
<div class="t n" style="left:1012.25px;width:120px;text-align:center;top:143.15px;font-size:8.8px;color:#262626;font-weight:normal;">0</div>
<div class="t n" style="left:1035.00px;width:120px;text-align:center;top:143.15px;font-size:8.8px;color:#262626;font-weight:normal;">0</div>
<div class="t n" style="left:1057.25px;width:120px;text-align:center;top:143.15px;font-size:8.8px;color:#262626;font-weight:normal;">0</div>
<div class="t n" style="left:967.00px;width:120px;text-align:center;top:156.71px;font-size:8.8px;color:#262626;font-weight:normal;">0</div>
<div class="t n" style="left:989.50px;width:120px;text-align:center;top:156.71px;font-size:8.8px;color:#262626;font-weight:normal;">0</div>
<div class="t n" style="left:1012.25px;width:120px;text-align:center;top:156.71px;font-size:8.8px;color:#262626;font-weight:normal;">0</div>
<div class="t n" style="left:1035.00px;width:120px;text-align:center;top:156.71px;font-size:8.8px;color:#262626;font-weight:normal;">0</div>
<div class="t n" style="left:1057.25px;width:120px;text-align:center;top:156.71px;font-size:8.8px;color:#262626;font-weight:normal;">0</div>
<div class="t n" style="left:967.00px;width:120px;text-align:center;top:170.27px;font-size:8.8px;color:#262626;font-weight:normal;">0</div>
<div class="t n" style="left:989.50px;width:120px;text-align:center;top:170.27px;font-size:8.8px;color:#262626;font-weight:normal;">0</div>
<div class="t n" style="left:1012.25px;width:120px;text-align:center;top:170.27px;font-size:8.8px;color:#262626;font-weight:normal;">0</div>
<div class="t n" style="left:1035.00px;width:120px;text-align:center;top:170.27px;font-size:8.8px;color:#262626;font-weight:normal;">0</div>
<div class="t n" style="left:1057.25px;width:120px;text-align:center;top:170.27px;font-size:8.8px;color:#262626;font-weight:normal;">0</div>
<div class="t n" style="left:967.00px;width:120px;text-align:center;top:183.83px;font-size:8.8px;color:#262626;font-weight:normal;">0</div>
<div class="t n" style="left:989.50px;width:120px;text-align:center;top:183.83px;font-size:8.8px;color:#262626;font-weight:normal;">0</div>
<div class="t n" style="left:1012.25px;width:120px;text-align:center;top:183.83px;font-size:8.8px;color:#262626;font-weight:normal;">0</div>
<div class="t n" style="left:1035.00px;width:120px;text-align:center;top:183.83px;font-size:8.8px;color:#262626;font-weight:normal;">0</div>
<div class="t n" style="left:1057.25px;width:120px;text-align:center;top:183.83px;font-size:8.8px;color:#262626;font-weight:normal;">0</div>
<div class="t n" style="left:967.00px;width:120px;text-align:center;top:197.39px;font-size:8.8px;color:#262626;font-weight:normal;">0</div>
<div class="t n" style="left:989.50px;width:120px;text-align:center;top:197.39px;font-size:8.8px;color:#262626;font-weight:normal;">0</div>
<div class="t n" style="left:1012.25px;width:120px;text-align:center;top:197.39px;font-size:8.8px;color:#262626;font-weight:normal;">0</div>
<div class="t n" style="left:1035.00px;width:120px;text-align:center;top:197.39px;font-size:8.8px;color:#262626;font-weight:normal;">0</div>
<div class="t n" style="left:1057.25px;width:120px;text-align:center;top:197.39px;font-size:8.8px;color:#262626;font-weight:normal;">0</div>
<div class="t n" style="left:967.00px;width:120px;text-align:center;top:210.95px;font-size:8.8px;color:#262626;font-weight:normal;">0</div>
<div class="t n" style="left:989.50px;width:120px;text-align:center;top:210.95px;font-size:8.8px;color:#262626;font-weight:normal;">0</div>
<div class="t n" style="left:1012.25px;width:120px;text-align:center;top:210.95px;font-size:8.8px;color:#262626;font-weight:normal;">0</div>
<div class="t n" style="left:1035.00px;width:120px;text-align:center;top:210.95px;font-size:8.8px;color:#262626;font-weight:normal;">0</div>
<div class="t n" style="left:1057.25px;width:120px;text-align:center;top:210.95px;font-size:8.8px;color:#262626;font-weight:normal;">0</div>
<div class="t n" style="left:967.00px;width:120px;text-align:center;top:224.51px;font-size:8.8px;color:#262626;font-weight:normal;">0</div>
<div class="t n" style="left:989.50px;width:120px;text-align:center;top:224.51px;font-size:8.8px;color:#262626;font-weight:normal;">0</div>
<div class="t n" style="left:1012.25px;width:120px;text-align:center;top:224.51px;font-size:8.8px;color:#262626;font-weight:normal;">0</div>
<div class="t n" style="left:1035.00px;width:120px;text-align:center;top:224.51px;font-size:8.8px;color:#262626;font-weight:normal;">0</div>
<div class="t n" style="left:1057.25px;width:120px;text-align:center;top:224.51px;font-size:8.8px;color:#262626;font-weight:normal;">0</div>
<div class="t n" style="left:967.00px;width:120px;text-align:center;top:238.07px;font-size:8.8px;color:#262626;font-weight:normal;">0</div>
<div class="t n" style="left:989.50px;width:120px;text-align:center;top:238.07px;font-size:8.8px;color:#262626;font-weight:normal;">0</div>
<div class="t n" style="left:1012.25px;width:120px;text-align:center;top:238.07px;font-size:8.8px;color:#262626;font-weight:normal;">0</div>
<div class="t n" style="left:1035.00px;width:120px;text-align:center;top:238.07px;font-size:8.8px;color:#262626;font-weight:normal;">0</div>
<div class="t n" style="left:1057.25px;width:120px;text-align:center;top:238.07px;font-size:8.8px;color:#262626;font-weight:normal;">0</div>
<div class="t n" style="left:967.00px;width:120px;text-align:center;top:251.63px;font-size:8.8px;color:#262626;font-weight:normal;">0</div>
<div class="t n" style="left:989.50px;width:120px;text-align:center;top:251.63px;font-size:8.8px;color:#262626;font-weight:normal;">0</div>
<div class="t n" style="left:1012.25px;width:120px;text-align:center;top:251.63px;font-size:8.8px;color:#262626;font-weight:normal;">0</div>
<div class="t n" style="left:1035.00px;width:120px;text-align:center;top:251.63px;font-size:8.8px;color:#262626;font-weight:normal;">0</div>
<div class="t n" style="left:1057.25px;width:120px;text-align:center;top:251.63px;font-size:8.8px;color:#262626;font-weight:normal;">0</div>
<div class="t n" style="left:967.00px;width:120px;text-align:center;top:265.19px;font-size:8.8px;color:#262626;font-weight:normal;">0</div>
<div class="t n" style="left:989.50px;width:120px;text-align:center;top:265.19px;font-size:8.8px;color:#262626;font-weight:normal;">0</div>
<div class="t n" style="left:1012.25px;width:120px;text-align:center;top:265.19px;font-size:8.8px;color:#262626;font-weight:normal;">0</div>
<div class="t n" style="left:1035.00px;width:120px;text-align:center;top:265.19px;font-size:8.8px;color:#262626;font-weight:normal;">0</div>
<div class="t n" style="left:1057.25px;width:120px;text-align:center;top:265.19px;font-size:8.8px;color:#262626;font-weight:normal;">0</div>
<div class="t n" style="left:967.00px;width:120px;text-align:center;top:278.75px;font-size:8.8px;color:#262626;font-weight:normal;">0</div>
<div class="t n" style="left:989.50px;width:120px;text-align:center;top:278.75px;font-size:8.8px;color:#262626;font-weight:normal;">0</div>
<div class="t n" style="left:1012.25px;width:120px;text-align:center;top:278.75px;font-size:8.8px;color:#262626;font-weight:normal;">0</div>
<div class="t n" style="left:1035.00px;width:120px;text-align:center;top:278.75px;font-size:8.8px;color:#262626;font-weight:normal;">0</div>
<div class="t n" style="left:1057.25px;width:120px;text-align:center;top:278.75px;font-size:8.8px;color:#262626;font-weight:normal;">0</div>
<div class="t n" style="left:967.00px;width:120px;text-align:center;top:292.31px;font-size:8.8px;color:#262626;font-weight:normal;">0</div>
<div class="t n" style="left:989.50px;width:120px;text-align:center;top:292.31px;font-size:8.8px;color:#262626;font-weight:normal;">0</div>
<div class="t n" style="left:1012.25px;width:120px;text-align:center;top:292.31px;font-size:8.8px;color:#262626;font-weight:normal;">0</div>
<div class="t n" style="left:1035.00px;width:120px;text-align:center;top:292.31px;font-size:8.8px;color:#262626;font-weight:normal;">0</div>
<div class="t n" style="left:1057.25px;width:120px;text-align:center;top:292.31px;font-size:8.8px;color:#262626;font-weight:normal;">0</div>
<div class="t n" style="left:967.00px;width:120px;text-align:center;top:305.87px;font-size:8.8px;color:#262626;font-weight:normal;">0</div>
<div class="t n" style="left:989.50px;width:120px;text-align:center;top:305.87px;font-size:8.8px;color:#262626;font-weight:normal;">0</div>
<div class="t n" style="left:1012.25px;width:120px;text-align:center;top:305.87px;font-size:8.8px;color:#262626;font-weight:normal;">0</div>
<div class="t n" style="left:1035.00px;width:120px;text-align:center;top:305.87px;font-size:8.8px;color:#262626;font-weight:normal;">0</div>
<div class="t n" style="left:1057.25px;width:120px;text-align:center;top:305.87px;font-size:8.8px;color:#262626;font-weight:normal;">0</div>
<div class="t n" style="left:967.00px;width:120px;text-align:center;top:319.43px;font-size:8.8px;color:#262626;font-weight:normal;">0</div>
<div class="t n" style="left:989.50px;width:120px;text-align:center;top:319.43px;font-size:8.8px;color:#262626;font-weight:normal;">0</div>
<div class="t n" style="left:1012.25px;width:120px;text-align:center;top:319.43px;font-size:8.8px;color:#262626;font-weight:normal;">0</div>
<div class="t n" style="left:1035.00px;width:120px;text-align:center;top:319.43px;font-size:8.8px;color:#262626;font-weight:normal;">0</div>
<div class="t n" style="left:1057.25px;width:120px;text-align:center;top:319.43px;font-size:8.8px;color:#262626;font-weight:normal;">0</div>
<div class="t n" style="left:967.00px;width:120px;text-align:center;top:332.99px;font-size:8.8px;color:#262626;font-weight:normal;">0</div>
<div class="t n" style="left:989.50px;width:120px;text-align:center;top:332.99px;font-size:8.8px;color:#262626;font-weight:normal;">0</div>
<div class="t n" style="left:1012.25px;width:120px;text-align:center;top:332.99px;font-size:8.8px;color:#262626;font-weight:normal;">0</div>
<div class="t n" style="left:1035.00px;width:120px;text-align:center;top:332.99px;font-size:8.8px;color:#262626;font-weight:normal;">0</div>
<div class="t n" style="left:1057.25px;width:120px;text-align:center;top:332.99px;font-size:8.8px;color:#262626;font-weight:normal;">0</div>
<div class="t n" style="left:967.00px;width:120px;text-align:center;top:346.55px;font-size:8.8px;color:#262626;font-weight:normal;">0</div>
<div class="t n" style="left:989.50px;width:120px;text-align:center;top:346.55px;font-size:8.8px;color:#262626;font-weight:normal;">0</div>
<div class="t n" style="left:1012.25px;width:120px;text-align:center;top:346.55px;font-size:8.8px;color:#262626;font-weight:normal;">0</div>
<div class="t n" style="left:1035.00px;width:120px;text-align:center;top:346.55px;font-size:8.8px;color:#262626;font-weight:normal;">0</div>
<div class="t n" style="left:1057.25px;width:120px;text-align:center;top:346.55px;font-size:8.8px;color:#262626;font-weight:normal;">0</div>
<div class="t n" style="left:967.00px;width:120px;text-align:center;top:360.11px;font-size:8.8px;color:#262626;font-weight:normal;">0</div>
<div class="t n" style="left:989.50px;width:120px;text-align:center;top:360.11px;font-size:8.8px;color:#262626;font-weight:normal;">0</div>
<div class="t n" style="left:1012.25px;width:120px;text-align:center;top:360.11px;font-size:8.8px;color:#262626;font-weight:normal;">0</div>
<div class="t n" style="left:1035.00px;width:120px;text-align:center;top:360.11px;font-size:8.8px;color:#262626;font-weight:normal;">0</div>
<div class="t n" style="left:1057.25px;width:120px;text-align:center;top:360.11px;font-size:8.8px;color:#262626;font-weight:normal;">0</div>
<div class="t n" style="left:967.00px;width:120px;text-align:center;top:373.67px;font-size:8.8px;color:#262626;font-weight:normal;">0</div>
<div class="t n" style="left:989.50px;width:120px;text-align:center;top:373.67px;font-size:8.8px;color:#262626;font-weight:normal;">0</div>
<div class="t n" style="left:1012.25px;width:120px;text-align:center;top:373.67px;font-size:8.8px;color:#262626;font-weight:normal;">0</div>
<div class="t n" style="left:1035.00px;width:120px;text-align:center;top:373.67px;font-size:8.8px;color:#262626;font-weight:normal;">0</div>
<div class="t n" style="left:1057.25px;width:120px;text-align:center;top:373.67px;font-size:8.8px;color:#262626;font-weight:normal;">0</div>
<div class="t n" style="left:967.00px;width:120px;text-align:center;top:387.23px;font-size:8.8px;color:#262626;font-weight:normal;">0</div>
<div class="t n" style="left:989.50px;width:120px;text-align:center;top:387.23px;font-size:8.8px;color:#262626;font-weight:normal;">0</div>
<div class="t n" style="left:1012.25px;width:120px;text-align:center;top:387.23px;font-size:8.8px;color:#262626;font-weight:normal;">0</div>
<div class="t n" style="left:1035.00px;width:120px;text-align:center;top:387.23px;font-size:8.8px;color:#262626;font-weight:normal;">0</div>
<div class="t n" style="left:1057.25px;width:120px;text-align:center;top:387.23px;font-size:8.8px;color:#262626;font-weight:normal;">0</div>
<div class="t n" style="left:967.00px;width:120px;text-align:center;top:400.79px;font-size:8.8px;color:#262626;font-weight:normal;">0</div>
<div class="t n" style="left:989.50px;width:120px;text-align:center;top:400.79px;font-size:8.8px;color:#262626;font-weight:normal;">0</div>
<div class="t n" style="left:1012.25px;width:120px;text-align:center;top:400.79px;font-size:8.8px;color:#262626;font-weight:normal;">0</div>
<div class="t n" style="left:1035.00px;width:120px;text-align:center;top:400.79px;font-size:8.8px;color:#262626;font-weight:normal;">0</div>
<div class="t n" style="left:1057.25px;width:120px;text-align:center;top:400.79px;font-size:8.8px;color:#262626;font-weight:normal;">0</div>
<div class="t n" style="left:967.00px;width:120px;text-align:center;top:414.35px;font-size:8.8px;color:#262626;font-weight:normal;">0</div>
<div class="t n" style="left:989.50px;width:120px;text-align:center;top:414.35px;font-size:8.8px;color:#262626;font-weight:normal;">0</div>
<div class="t n" style="left:1012.25px;width:120px;text-align:center;top:414.35px;font-size:8.8px;color:#262626;font-weight:normal;">0</div>
<div class="t n" style="left:1035.00px;width:120px;text-align:center;top:414.35px;font-size:8.8px;color:#262626;font-weight:normal;">0</div>
<div class="t n" style="left:1057.25px;width:120px;text-align:center;top:414.35px;font-size:8.8px;color:#262626;font-weight:normal;">0</div>
<div class="t n" style="left:967.00px;width:120px;text-align:center;top:427.91px;font-size:8.8px;color:#262626;font-weight:normal;">0</div>
<div class="t n" style="left:989.50px;width:120px;text-align:center;top:427.91px;font-size:8.8px;color:#262626;font-weight:normal;">0</div>
<div class="t n" style="left:1012.25px;width:120px;text-align:center;top:427.91px;font-size:8.8px;color:#262626;font-weight:normal;">0</div>
<div class="t n" style="left:1035.00px;width:120px;text-align:center;top:427.91px;font-size:8.8px;color:#262626;font-weight:normal;">0</div>
<div class="t n" style="left:1057.25px;width:120px;text-align:center;top:427.91px;font-size:8.8px;color:#262626;font-weight:normal;">0</div>
<div class="t n" style="left:967.00px;width:120px;text-align:center;top:441.47px;font-size:8.8px;color:#262626;font-weight:normal;">0</div>
<div class="t n" style="left:989.50px;width:120px;text-align:center;top:441.47px;font-size:8.8px;color:#262626;font-weight:normal;">0</div>
<div class="t n" style="left:1012.25px;width:120px;text-align:center;top:441.47px;font-size:8.8px;color:#262626;font-weight:normal;">0</div>
<div class="t n" style="left:1035.00px;width:120px;text-align:center;top:441.47px;font-size:8.8px;color:#262626;font-weight:normal;">0</div>
<div class="t n" style="left:1057.25px;width:120px;text-align:center;top:441.47px;font-size:8.8px;color:#262626;font-weight:normal;">0</div>
<div class="t n" style="left:967.00px;width:120px;text-align:center;top:455.03px;font-size:8.8px;color:#262626;font-weight:normal;">0</div>
<div class="t n" style="left:989.50px;width:120px;text-align:center;top:455.03px;font-size:8.8px;color:#262626;font-weight:normal;">0</div>
<div class="t n" style="left:1012.25px;width:120px;text-align:center;top:455.03px;font-size:8.8px;color:#262626;font-weight:normal;">0</div>
<div class="t n" style="left:1035.00px;width:120px;text-align:center;top:455.03px;font-size:8.8px;color:#262626;font-weight:normal;">0</div>
<div class="t n" style="left:1057.25px;width:120px;text-align:center;top:455.03px;font-size:8.8px;color:#262626;font-weight:normal;">0</div>
<div class="t n" style="left:967.00px;width:120px;text-align:center;top:468.59px;font-size:8.8px;color:#262626;font-weight:normal;">0</div>
<div class="t n" style="left:989.50px;width:120px;text-align:center;top:468.59px;font-size:8.8px;color:#262626;font-weight:normal;">0</div>
<div class="t n" style="left:1012.25px;width:120px;text-align:center;top:468.59px;font-size:8.8px;color:#262626;font-weight:normal;">0</div>
<div class="t n" style="left:1035.00px;width:120px;text-align:center;top:468.59px;font-size:8.8px;color:#262626;font-weight:normal;">0</div>
<div class="t n" style="left:1057.25px;width:120px;text-align:center;top:468.59px;font-size:8.8px;color:#262626;font-weight:normal;">0</div>
<div class="t n" style="left:967.00px;width:120px;text-align:center;top:482.15px;font-size:8.8px;color:#262626;font-weight:normal;">0</div>
<div class="t n" style="left:989.50px;width:120px;text-align:center;top:482.15px;font-size:8.8px;color:#262626;font-weight:normal;">0</div>
<div class="t n" style="left:1012.25px;width:120px;text-align:center;top:482.15px;font-size:8.8px;color:#262626;font-weight:normal;">0</div>
<div class="t n" style="left:1035.00px;width:120px;text-align:center;top:482.15px;font-size:8.8px;color:#262626;font-weight:normal;">0</div>
<div class="t n" style="left:1057.25px;width:120px;text-align:center;top:482.15px;font-size:8.8px;color:#262626;font-weight:normal;">0</div>
<div class="t n" style="left:967.00px;width:120px;text-align:center;top:495.71px;font-size:8.8px;color:#262626;font-weight:normal;">0</div>
<div class="t n" style="left:989.50px;width:120px;text-align:center;top:495.71px;font-size:8.8px;color:#262626;font-weight:normal;">0</div>
<div class="t n" style="left:1012.25px;width:120px;text-align:center;top:495.71px;font-size:8.8px;color:#262626;font-weight:normal;">0</div>
<div class="t n" style="left:1035.00px;width:120px;text-align:center;top:495.71px;font-size:8.8px;color:#262626;font-weight:normal;">0</div>
<div class="t n" style="left:1057.25px;width:120px;text-align:center;top:495.71px;font-size:8.8px;color:#262626;font-weight:normal;">0</div>
<div class="t n" style="left:967.00px;width:120px;text-align:center;top:509.27px;font-size:8.8px;color:#262626;font-weight:normal;">0</div>
<div class="t n" style="left:989.50px;width:120px;text-align:center;top:509.27px;font-size:8.8px;color:#262626;font-weight:normal;">0</div>
<div class="t n" style="left:1012.25px;width:120px;text-align:center;top:509.27px;font-size:8.8px;color:#262626;font-weight:normal;">0</div>
<div class="t n" style="left:1035.00px;width:120px;text-align:center;top:509.27px;font-size:8.8px;color:#262626;font-weight:normal;">0</div>
<div class="t n" style="left:1057.25px;width:120px;text-align:center;top:509.27px;font-size:8.8px;color:#262626;font-weight:normal;">0</div>
<div class="t n" style="left:967.00px;width:120px;text-align:center;top:522.83px;font-size:8.8px;color:#262626;font-weight:normal;">0</div>
<div class="t n" style="left:989.50px;width:120px;text-align:center;top:522.83px;font-size:8.8px;color:#262626;font-weight:normal;">0</div>
<div class="t n" style="left:1012.25px;width:120px;text-align:center;top:522.83px;font-size:8.8px;color:#262626;font-weight:normal;">0</div>
<div class="t n" style="left:1035.00px;width:120px;text-align:center;top:522.83px;font-size:8.8px;color:#262626;font-weight:normal;">0</div>
<div class="t n" style="left:1057.25px;width:120px;text-align:center;top:522.83px;font-size:8.8px;color:#262626;font-weight:normal;">0</div>
<div class="t n" style="left:967.00px;width:120px;text-align:center;top:536.39px;font-size:8.8px;color:#262626;font-weight:normal;">0</div>
<div class="t n" style="left:989.50px;width:120px;text-align:center;top:536.39px;font-size:8.8px;color:#262626;font-weight:normal;">0</div>
<div class="t n" style="left:1012.25px;width:120px;text-align:center;top:536.39px;font-size:8.8px;color:#262626;font-weight:normal;">0</div>
<div class="t n" style="left:1035.00px;width:120px;text-align:center;top:536.39px;font-size:8.8px;color:#262626;font-weight:normal;">0</div>
<div class="t n" style="left:1057.25px;width:120px;text-align:center;top:536.39px;font-size:8.8px;color:#262626;font-weight:normal;">0</div>
<div class="t n" style="left:967.00px;width:120px;text-align:center;top:549.95px;font-size:8.8px;color:#262626;font-weight:normal;">0</div>
<div class="t n" style="left:989.50px;width:120px;text-align:center;top:549.95px;font-size:8.8px;color:#262626;font-weight:normal;">0</div>
<div class="t n" style="left:1012.25px;width:120px;text-align:center;top:549.95px;font-size:8.8px;color:#262626;font-weight:normal;">0</div>
<div class="t n" style="left:1035.00px;width:120px;text-align:center;top:549.95px;font-size:8.8px;color:#262626;font-weight:normal;">0</div>
<div class="t n" style="left:1057.25px;width:120px;text-align:center;top:549.95px;font-size:8.8px;color:#262626;font-weight:normal;">0</div>
<div class="t n" style="left:967.00px;width:120px;text-align:center;top:563.51px;font-size:8.8px;color:#262626;font-weight:normal;">0</div>
<div class="t n" style="left:989.50px;width:120px;text-align:center;top:563.51px;font-size:8.8px;color:#262626;font-weight:normal;">0</div>
<div class="t n" style="left:1012.25px;width:120px;text-align:center;top:563.51px;font-size:8.8px;color:#262626;font-weight:normal;">0</div>
<div class="t n" style="left:1035.00px;width:120px;text-align:center;top:563.51px;font-size:8.8px;color:#262626;font-weight:normal;">0</div>
<div class="t n" style="left:1057.25px;width:120px;text-align:center;top:563.51px;font-size:8.8px;color:#262626;font-weight:normal;">0</div>
<div class="t n" style="left:967.00px;width:120px;text-align:center;top:577.07px;font-size:8.8px;color:#262626;font-weight:normal;">0</div>
<div class="t n" style="left:989.50px;width:120px;text-align:center;top:577.07px;font-size:8.8px;color:#262626;font-weight:normal;">0</div>
<div class="t n" style="left:1012.25px;width:120px;text-align:center;top:577.07px;font-size:8.8px;color:#262626;font-weight:normal;">0</div>
<div class="t n" style="left:1035.00px;width:120px;text-align:center;top:577.07px;font-size:8.8px;color:#262626;font-weight:normal;">0</div>
<div class="t n" style="left:1057.25px;width:120px;text-align:center;top:577.07px;font-size:8.8px;color:#262626;font-weight:normal;">0</div>
<div class="t n" style="left:967.00px;width:120px;text-align:center;top:590.63px;font-size:8.8px;color:#262626;font-weight:normal;">0</div>
<div class="t n" style="left:989.50px;width:120px;text-align:center;top:590.63px;font-size:8.8px;color:#262626;font-weight:normal;">0</div>
<div class="t n" style="left:1012.25px;width:120px;text-align:center;top:590.63px;font-size:8.8px;color:#262626;font-weight:normal;">0</div>
<div class="t n" style="left:1035.00px;width:120px;text-align:center;top:590.63px;font-size:8.8px;color:#262626;font-weight:normal;">0</div>
<div class="t n" style="left:1057.25px;width:120px;text-align:center;top:590.63px;font-size:8.8px;color:#262626;font-weight:normal;">0</div>
<div class="t n" style="left:967.00px;width:120px;text-align:center;top:604.19px;font-size:8.8px;color:#262626;font-weight:normal;">0</div>
<div class="t n" style="left:989.50px;width:120px;text-align:center;top:604.19px;font-size:8.8px;color:#262626;font-weight:normal;">0</div>
<div class="t n" style="left:1012.25px;width:120px;text-align:center;top:604.19px;font-size:8.8px;color:#262626;font-weight:normal;">0</div>
<div class="t n" style="left:1035.00px;width:120px;text-align:center;top:604.19px;font-size:8.8px;color:#262626;font-weight:normal;">0</div>
<div class="t n" style="left:1057.25px;width:120px;text-align:center;top:604.19px;font-size:8.8px;color:#262626;font-weight:normal;">0</div>
<div class="t n" style="left:967.00px;width:120px;text-align:center;top:617.75px;font-size:8.8px;color:#262626;font-weight:normal;">0</div>
<div class="t n" style="left:989.50px;width:120px;text-align:center;top:617.75px;font-size:8.8px;color:#262626;font-weight:normal;">0</div>
<div class="t n" style="left:1012.25px;width:120px;text-align:center;top:617.75px;font-size:8.8px;color:#262626;font-weight:normal;">0</div>
<div class="t n" style="left:1035.00px;width:120px;text-align:center;top:617.75px;font-size:8.8px;color:#262626;font-weight:normal;">0</div>
<div class="t n" style="left:1057.25px;width:120px;text-align:center;top:617.75px;font-size:8.8px;color:#262626;font-weight:normal;">0</div>
<div class="a" style="left:1136.00px;top:48.50px;width:284.00px;height:37.30px;background:#00f0d2"></div>
<div class="t" style="left:1128px;width:300px;text-align:center;top:61.52px;font-size:11.2px;color:#111;font-weight:bold">Comments &amp; Roster Preferences</div>
<div class="a" style="left:1136.00px;top:85.76px;width:284.00px;height:534.24px;background:#cde8f4"></div>
<div class="a" style="left:1137.00px;top:98.82px;width:283.00px;height:1.00px;background:repeating-linear-gradient(90deg,#fff 0 7px,transparent 7px 9px,#fff 9px 11px,transparent 11px 13px)"></div>
<div class="a" style="left:1137.00px;top:112.38px;width:283.00px;height:1.00px;background:repeating-linear-gradient(90deg,#fff 0 7px,transparent 7px 9px,#fff 9px 11px,transparent 11px 13px)"></div>
<div class="a" style="left:1137.00px;top:125.94px;width:283.00px;height:1.00px;background:repeating-linear-gradient(90deg,#fff 0 7px,transparent 7px 9px,#fff 9px 11px,transparent 11px 13px)"></div>
<div class="a" style="left:1137.00px;top:139.50px;width:283.00px;height:1.00px;background:repeating-linear-gradient(90deg,#fff 0 7px,transparent 7px 9px,#fff 9px 11px,transparent 11px 13px)"></div>
<div class="a" style="left:1137.00px;top:153.06px;width:283.00px;height:1.00px;background:repeating-linear-gradient(90deg,#fff 0 7px,transparent 7px 9px,#fff 9px 11px,transparent 11px 13px)"></div>
<div class="a" style="left:1137.00px;top:166.62px;width:283.00px;height:1.00px;background:repeating-linear-gradient(90deg,#fff 0 7px,transparent 7px 9px,#fff 9px 11px,transparent 11px 13px)"></div>
<div class="a" style="left:1137.00px;top:180.18px;width:283.00px;height:1.00px;background:repeating-linear-gradient(90deg,#fff 0 7px,transparent 7px 9px,#fff 9px 11px,transparent 11px 13px)"></div>
<div class="a" style="left:1137.00px;top:193.74px;width:283.00px;height:1.00px;background:repeating-linear-gradient(90deg,#fff 0 7px,transparent 7px 9px,#fff 9px 11px,transparent 11px 13px)"></div>
<div class="a" style="left:1137.00px;top:207.30px;width:283.00px;height:1.00px;background:repeating-linear-gradient(90deg,#fff 0 7px,transparent 7px 9px,#fff 9px 11px,transparent 11px 13px)"></div>
<div class="a" style="left:1137.00px;top:220.86px;width:283.00px;height:1.00px;background:repeating-linear-gradient(90deg,#fff 0 7px,transparent 7px 9px,#fff 9px 11px,transparent 11px 13px)"></div>
<div class="a" style="left:1137.00px;top:234.42px;width:283.00px;height:1.00px;background:repeating-linear-gradient(90deg,#fff 0 7px,transparent 7px 9px,#fff 9px 11px,transparent 11px 13px)"></div>
<div class="a" style="left:1137.00px;top:247.98px;width:283.00px;height:1.00px;background:repeating-linear-gradient(90deg,#fff 0 7px,transparent 7px 9px,#fff 9px 11px,transparent 11px 13px)"></div>
<div class="a" style="left:1137.00px;top:261.54px;width:283.00px;height:1.00px;background:repeating-linear-gradient(90deg,#fff 0 7px,transparent 7px 9px,#fff 9px 11px,transparent 11px 13px)"></div>
<div class="a" style="left:1137.00px;top:275.10px;width:283.00px;height:1.00px;background:repeating-linear-gradient(90deg,#fff 0 7px,transparent 7px 9px,#fff 9px 11px,transparent 11px 13px)"></div>
<div class="a" style="left:1137.00px;top:288.66px;width:283.00px;height:1.00px;background:repeating-linear-gradient(90deg,#fff 0 7px,transparent 7px 9px,#fff 9px 11px,transparent 11px 13px)"></div>
<div class="a" style="left:1137.00px;top:302.22px;width:283.00px;height:1.00px;background:repeating-linear-gradient(90deg,#fff 0 7px,transparent 7px 9px,#fff 9px 11px,transparent 11px 13px)"></div>
<div class="a" style="left:1137.00px;top:315.78px;width:283.00px;height:1.00px;background:repeating-linear-gradient(90deg,#fff 0 7px,transparent 7px 9px,#fff 9px 11px,transparent 11px 13px)"></div>
<div class="a" style="left:1137.00px;top:329.34px;width:283.00px;height:1.00px;background:repeating-linear-gradient(90deg,#fff 0 7px,transparent 7px 9px,#fff 9px 11px,transparent 11px 13px)"></div>
<div class="a" style="left:1137.00px;top:342.90px;width:283.00px;height:1.00px;background:repeating-linear-gradient(90deg,#fff 0 7px,transparent 7px 9px,#fff 9px 11px,transparent 11px 13px)"></div>
<div class="a" style="left:1137.00px;top:356.46px;width:283.00px;height:1.00px;background:repeating-linear-gradient(90deg,#fff 0 7px,transparent 7px 9px,#fff 9px 11px,transparent 11px 13px)"></div>
<div class="a" style="left:1137.00px;top:370.02px;width:283.00px;height:1.00px;background:repeating-linear-gradient(90deg,#fff 0 7px,transparent 7px 9px,#fff 9px 11px,transparent 11px 13px)"></div>
<div class="a" style="left:1137.00px;top:383.58px;width:283.00px;height:1.00px;background:repeating-linear-gradient(90deg,#fff 0 7px,transparent 7px 9px,#fff 9px 11px,transparent 11px 13px)"></div>
<div class="a" style="left:1137.00px;top:397.14px;width:283.00px;height:1.00px;background:repeating-linear-gradient(90deg,#fff 0 7px,transparent 7px 9px,#fff 9px 11px,transparent 11px 13px)"></div>
<div class="a" style="left:1137.00px;top:410.70px;width:283.00px;height:1.00px;background:repeating-linear-gradient(90deg,#fff 0 7px,transparent 7px 9px,#fff 9px 11px,transparent 11px 13px)"></div>
<div class="a" style="left:1137.00px;top:424.26px;width:283.00px;height:1.00px;background:repeating-linear-gradient(90deg,#fff 0 7px,transparent 7px 9px,#fff 9px 11px,transparent 11px 13px)"></div>
<div class="a" style="left:1137.00px;top:437.82px;width:283.00px;height:1.00px;background:repeating-linear-gradient(90deg,#fff 0 7px,transparent 7px 9px,#fff 9px 11px,transparent 11px 13px)"></div>
<div class="a" style="left:1137.00px;top:451.38px;width:283.00px;height:1.00px;background:repeating-linear-gradient(90deg,#fff 0 7px,transparent 7px 9px,#fff 9px 11px,transparent 11px 13px)"></div>
<div class="a" style="left:1137.00px;top:464.94px;width:283.00px;height:1.00px;background:repeating-linear-gradient(90deg,#fff 0 7px,transparent 7px 9px,#fff 9px 11px,transparent 11px 13px)"></div>
<div class="a" style="left:1137.00px;top:478.50px;width:283.00px;height:1.00px;background:repeating-linear-gradient(90deg,#fff 0 7px,transparent 7px 9px,#fff 9px 11px,transparent 11px 13px)"></div>
<div class="a" style="left:1137.00px;top:492.06px;width:283.00px;height:1.00px;background:repeating-linear-gradient(90deg,#fff 0 7px,transparent 7px 9px,#fff 9px 11px,transparent 11px 13px)"></div>
<div class="a" style="left:1137.00px;top:505.62px;width:283.00px;height:1.00px;background:repeating-linear-gradient(90deg,#fff 0 7px,transparent 7px 9px,#fff 9px 11px,transparent 11px 13px)"></div>
<div class="a" style="left:1137.00px;top:519.18px;width:283.00px;height:1.00px;background:repeating-linear-gradient(90deg,#fff 0 7px,transparent 7px 9px,#fff 9px 11px,transparent 11px 13px)"></div>
<div class="a" style="left:1137.00px;top:532.74px;width:283.00px;height:1.00px;background:repeating-linear-gradient(90deg,#fff 0 7px,transparent 7px 9px,#fff 9px 11px,transparent 11px 13px)"></div>
<div class="a" style="left:1137.00px;top:546.30px;width:283.00px;height:1.00px;background:repeating-linear-gradient(90deg,#fff 0 7px,transparent 7px 9px,#fff 9px 11px,transparent 11px 13px)"></div>
<div class="a" style="left:1137.00px;top:559.86px;width:283.00px;height:1.00px;background:repeating-linear-gradient(90deg,#fff 0 7px,transparent 7px 9px,#fff 9px 11px,transparent 11px 13px)"></div>
<div class="a" style="left:1137.00px;top:573.42px;width:283.00px;height:1.00px;background:repeating-linear-gradient(90deg,#fff 0 7px,transparent 7px 9px,#fff 9px 11px,transparent 11px 13px)"></div>
<div class="a" style="left:1137.00px;top:586.98px;width:283.00px;height:1.00px;background:repeating-linear-gradient(90deg,#fff 0 7px,transparent 7px 9px,#fff 9px 11px,transparent 11px 13px)"></div>
<div class="a" style="left:1137.00px;top:600.54px;width:283.00px;height:1.00px;background:repeating-linear-gradient(90deg,#fff 0 7px,transparent 7px 9px,#fff 9px 11px,transparent 11px 13px)"></div>
<div class="a" style="left:1137.00px;top:614.10px;width:283.00px;height:1.00px;background:repeating-linear-gradient(90deg,#fff 0 7px,transparent 7px 9px,#fff 9px 11px,transparent 11px 13px)"></div>
<div class="a" style="left:1137.00px;top:627.66px;width:283.00px;height:1.00px;background:repeating-linear-gradient(90deg,#fff 0 7px,transparent 7px 9px,#fff 9px 11px,transparent 11px 13px)"></div>
<div class="a" style="left:1135.50px;top:48.00px;width:1.00px;height:572.00px;background:repeating-linear-gradient(180deg,#333 0 4px,transparent 4px 6px,#333 6px 7px,transparent 7px 9px)"></div>
<div class="a" style="left:1136.00px;top:48.00px;width:284.00px;height:1.00px;background:repeating-linear-gradient(90deg,#333 0 4px,transparent 4px 6px,#333 6px 7px,transparent 7px 9px)"></div>
</div>
<div class="a" style="left:0;top:739px;width:1445px;height:21px;background:#e8e8e8"></div>
<div class="a" style="left:0;top:759px;width:1445px;height:1px;background:#d4d4d4"></div>
<svg class="a" style="left:20px;top:746px" width="4" height="7" viewBox="0 0 4 7"><path d="M3.5 0.5L0.5 3.5l3 3" fill="none" stroke="#bbb"/></svg>
<svg class="a" style="left:42px;top:746px" width="4" height="7" viewBox="0 0 4 7"><path d="M0.5 0.5l3 3-3 3" fill="none" stroke="#bbb"/></svg>
<div class="a" style="left:111.0px;top:741px;width:31.5px;height:16.5px;background:#c1eefb"></div>
<div class="t" style="left:101.0px;width:51.5px;text-align:center;top:745px;font-size:10px;color:#222">Feb</div>
<div class="a" style="left:145.7px;top:741px;width:32.3px;height:16.5px;background:#0f4a93"></div>
<div class="t" style="left:135.7px;width:52.3px;text-align:center;top:745px;font-size:10px;color:#fff">Mar</div>
<div class="a" style="left:182.2px;top:741px;width:30.4px;height:16.5px;background:#3d78b5"></div>
<div class="t" style="left:172.2px;width:50.4px;text-align:center;top:745px;font-size:10px;color:#fff">Apr</div>
<div class="a" style="left:216.5px;top:741px;width:33.5px;height:16.5px;background:#7e9fcf"></div>
<div class="t" style="left:206.5px;width:53.5px;text-align:center;top:745px;font-size:10px;color:#222">May</div>
<div class="a" style="left:254.6px;top:741px;width:28.6px;height:16.5px;background:#e6ebee"></div>
<div class="t" style="left:244.6px;width:48.6px;text-align:center;top:745px;font-size:10px;color:#222">Jun</div>
<div class="a" style="left:288.8px;top:741px;width:28.0px;height:16.5px;background:#00efd1"></div>
<div class="t" style="left:278.8px;width:48.0px;text-align:center;top:745px;font-size:10px;color:#222">Jul</div>
<div class="a" style="left:320.6px;top:741px;width:32.6px;height:16.5px;background:#6595c1"></div>
<div class="t" style="left:310.6px;width:52.6px;text-align:center;top:745px;font-size:10px;color:#222">Aug</div>
<div class="a" style="left:357.3px;top:741px;width:34.9px;height:16.5px;background:#244d88"></div>
<div class="t" style="left:347.3px;width:54.9px;text-align:center;top:745px;font-size:10px;color:#fff">Sept</div>
<div class="a" style="left:396.0px;top:741px;width:29.8px;height:16.5px;background:#9a5fe0"></div>
<div class="t" style="left:386.0px;width:49.8px;text-align:center;top:745px;font-size:10px;color:#fff">Oct</div>
<div class="a" style="left:429.6px;top:741px;width:33.6px;height:16.5px;background:#c3effb"></div>
<div class="t" style="left:419.6px;width:53.6px;text-align:center;top:745px;font-size:10px;color:#222">Nov</div>
<div class="a" style="left:466.5px;top:741px;width:31.0px;height:16.5px;background:#ffd966"></div>
<div class="t" style="left:456.5px;width:51.0px;text-align:center;top:745px;font-size:10px;color:#222">Dec</div>
<div class="a" style="left:110.0px;top:741px;width:1px;height:16px;background:#b8b8b8"></div>
<div class="a" style="left:144.0px;top:741px;width:1px;height:16px;background:#b8b8b8"></div>
<div class="a" style="left:180.0px;top:741px;width:1px;height:16px;background:#b8b8b8"></div>
<div class="a" style="left:214.5px;top:741px;width:1px;height:16px;background:#b8b8b8"></div>
<div class="a" style="left:252.0px;top:741px;width:1px;height:16px;background:#b8b8b8"></div>
<div class="a" style="left:286.0px;top:741px;width:1px;height:16px;background:#b8b8b8"></div>
<div class="a" style="left:318.5px;top:741px;width:1px;height:16px;background:#b8b8b8"></div>
<div class="a" style="left:355.3px;top:741px;width:1px;height:16px;background:#b8b8b8"></div>
<div class="a" style="left:394.0px;top:741px;width:1px;height:16px;background:#b8b8b8"></div>
<div class="a" style="left:427.7px;top:741px;width:1px;height:16px;background:#b8b8b8"></div>
<div class="a" style="left:465.0px;top:741px;width:1px;height:16px;background:#b8b8b8"></div>
<div class="a" style="left:499.5px;top:741px;width:1px;height:16px;background:#b8b8b8"></div>
<div class="a" style="left:75px;top:739px;width:34px;height:20px;background:linear-gradient(#fff 40%,#fbeee6);border-left:1px solid #d0d0d0;border-right:1px solid #d0d0d0"></div>
<div class="a" style="left:75px;top:757px;width:35px;height:2px;background:#217346"></div>
<div class="t" style="left:75px;width:34px;text-align:center;top:744.6px;font-size:10px;color:#1e6b41;font-weight:bold">Jan</div>
<svg class="a" style="left:523px;top:743px" width="14" height="14" viewBox="0 0 14 14"><circle cx="7" cy="7" r="6" fill="none" stroke="#666" stroke-width="1"/><path d="M7 3.8v6.4M3.8 7h6.4" stroke="#666" stroke-width="1"/></svg>
<svg class="a" style="left:865px;top:744px" width="4" height="12" viewBox="0 0 4 12"><circle cx="2" cy="2" r=".7" fill="#999"/><circle cx="2" cy="6" r=".7" fill="#999"/><circle cx="2" cy="10" r=".7" fill="#999"/></svg>
<div class="a" style="left:880px;top:744px;width:11px;height:11px;background:#fff;border:1px solid #a8a8a8"></div>
<svg class="a" style="left:883px;top:746.5px" width="5" height="7" viewBox="0 0 5 7"><path d="M4.5 0.5L1 3.5l3.5 3z" fill="#222"/></svg>
<div class="a" style="left:891px;top:744px;width:515px;height:11px;background:#fff;border:1px solid #a8a8a8"></div>
<div class="a" style="left:1418px;top:744px;width:11px;height:11px;background:#fff;border:1px solid #a8a8a8"></div>
<svg class="a" style="left:1421px;top:746.5px" width="5" height="7" viewBox="0 0 5 7"><path d="M0.5 0.5L4 3.5l-3.5 3z" fill="#222"/></svg>
<div class="a" style="left:0;top:760px;width:1445px;height:17px;background:#f3f3f3"></div>
<div class="a" style="left:0;top:776px;width:1445px;height:1px;background:#dadada"></div>
<div class="t n" style="left:8.1px;top:765.66px;font-size:8.2px;color:#333;font-weight:normal;">Ready</div>
<svg class="a" style="left:46px;top:763px" width="11" height="11" viewBox="0 0 11 11"><rect x="0.5" y="0.5" width="3" height="3" fill="#666"/><path d="M5 1.5h5.5M3 5.5v5M5.5 4.5v6M8 5.5v5M10.5 4.5v6M0.5 10.5h10" stroke="#777" stroke-width="1"/></svg>
<svg class="a" style="left:69px;top:762px" width="13" height="13" viewBox="0 0 13 13"><path d="M6 1.5a4.5 4.5 0 1 0 3.5 7.3" fill="none" stroke="#444" stroke-width="1.1"/><path d="M6 4l1 3M4 6l3 1M8 8l4 4M12 8l-4 4" stroke="#444" stroke-width="1.1"/></svg>
<div class="t" style="left:84.7px;top:765.53px;font-size:8.0px;color:#222;font-weight:bold;">Accessibility: Investigate</div>
<div class="a" style="left:1224px;top:760px;width:30px;height:16px;background:#d4d4d4"></div>
<svg class="a" style="left:1233px;top:763px" width="11" height="10" viewBox="0 0 11 10"><rect x="0.5" y="0.5" width="10" height="9" fill="none" stroke="#7a7a7a"/><path d="M0.5 3.5h10M0.5 6.5h10M3.8 0.5v9M7.2 0.5v9" stroke="#7a7a7a"/></svg>
<svg class="a" style="left:1263px;top:763px" width="11" height="10" viewBox="0 0 11 10"><rect x="0.5" y="0.5" width="10" height="9" fill="none" stroke="#8a8a8a"/><path d="M3 2.5v5M8 2.5v5M3 2.5h1M3 7.5h1M7 2.5h1M7 7.5h1" fill="none" stroke="#8a8a8a"/></svg>
<svg class="a" style="left:1293px;top:763px" width="11" height="10" viewBox="0 0 11 10"><path d="M0.5 0.5h10v9h-10zM0.5 6.5h4v-6M3 0.5v3" fill="none" stroke="#8a8a8a"/></svg>
<div class="a" style="left:1318.5px;top:767.5px;width:6px;height:1px;background:#555"></div>
<div class="a" style="left:1328px;top:767.5px;width:75px;height:1px;background:#777"></div>
<div class="a" style="left:1356px;top:763px;width:4px;height:10px;background:#444"></div>
<div class="a" style="left:1365px;top:765.5px;width:1px;height:4px;background:#777"></div>
<div class="a" style="left:1406.5px;top:767.5px;width:7px;height:1px;background:#555"></div>
<div class="a" style="left:1409.5px;top:764.5px;width:1px;height:7px;background:#555"></div>
<div class="t n" style="left:1422.8px;top:764.30px;font-size:8.5px;color:#555;font-weight:normal;">80%</div>
<div class="a" style="left:0;top:777px;width:1445px;height:36px;background:linear-gradient(90deg,#e8e0ee,#efe1eb 18%,#f3e2e8 40%,#f4e2e8)"></div>
<svg class="a" style="left:15px;top:786px" width="18" height="18" viewBox="0 0 18 18"><defs><linearGradient id="wg" x1="0" y1="0" x2="1" y2="1"><stop offset="0" stop-color="#3ccbf4"/><stop offset="1" stop-color="#1a7fd6"/></linearGradient></defs><rect x="0" y="0" width="8.5" height="8.5" fill="url(#wg)"/><rect x="9.5" y="0" width="8.5" height="8.5" fill="url(#wg)"/><rect x="0" y="9.5" width="8.5" height="8.5" fill="url(#wg)"/><rect x="9.5" y="9.5" width="8.5" height="8.5" fill="url(#wg)"/></svg>
<div class="a" style="left:44px;top:784px;width:163px;height:22px;border-radius:11px;background:#faf6f9;border:1px solid #ddd3dc"></div>
<svg class="a" style="left:51px;top:788px" width="12" height="13" viewBox="0 0 12 13"><circle cx="5" cy="5" r="4" fill="none" stroke="#222" stroke-width="1.3"/><path d="M8 8l3.5 3.8" stroke="#222" stroke-width="1.4"/></svg>
<div class="t n" style="left:70.7px;top:790.37px;font-size:9.6px;color:#666;font-weight:normal;">Search</div>
<svg class="a" style="left:166px;top:785px" width="40" height="21" viewBox="166 785 40 21"><path d="M180 804l16-9" stroke="#8a5a4a" stroke-width="1.2"/><path d="M176 796c-1-4 0-8 2-10 1 3 1 7-2 10zM195 791c2-3 5-4 8-3-2 3-5 4-8 3zM186 802c2-2 5-3 7-2-2 2-5 3-7 2z" fill="#5aa040"/><g fill="#2f4fb0"><circle cx="176" cy="796.6" r="2"/><circle cx="184.4" cy="794.5" r="2.2"/><circle cx="183.7" cy="798.9" r="2"/><circle cx="190.6" cy="791" r="2"/><circle cx="194" cy="796" r="2.2"/></g><g fill="#4a6fd8"><circle cx="175.5" cy="796" r=".8"/><circle cx="184" cy="794" r=".8"/><circle cx="193.5" cy="795.5" r=".8"/></g><path d="M170 791v13M168.5 794l3 1M168.5 797l3 1M168.5 800l3 1M200 793l-2 11M198 796l3 1M197.5 799l3 1M197 802l3 .5" stroke="#c05ab0" stroke-width="1.1"/></svg>
<svg class="a" style="left:216px;top:786px" width="20" height="18" viewBox="0 0 20 18"><defs><linearGradient id="cp1" x1="0" y1="0" x2="1" y2="1"><stop offset="0" stop-color="#1fb0e8"/><stop offset=".6" stop-color="#22c6a0"/><stop offset="1" stop-color="#7d6cf0"/></linearGradient><linearGradient id="cp2" x1="0" y1="0" x2="1" y2="1"><stop offset="0" stop-color="#b06cf0"/><stop offset=".5" stop-color="#f05a9a"/><stop offset="1" stop-color="#f6a030"/></linearGradient></defs><path d="M6 1h5.5c1.2 0 1.8.8 1.5 2L10.5 12c-.4 1.2-1.2 1.8-2.4 1.8H3c-2 0-3-1.3-2.6-3L2.6 4C3.2 2 4.3 1 6 1z" fill="url(#cp1)"/><path d="M14 17H8.5c-1.2 0-1.8-.8-1.5-2L9.5 6c.4-1.2 1.2-1.8 2.4-1.8H17c2 0 3 1.3 2.6 3L17.4 14c-.6 2-1.7 3-3.4 3z" fill="url(#cp2)"/></svg>
<svg class="a" style="left:250px;top:786px" width="19" height="17" viewBox="0 0 19 17"><rect x="6" y="1" width="12" height="15" rx="1.5" fill="#1a6fd0"/><rect x="9" y="4" width="9" height="4" fill="#3aa0f0"/><path d="M6 9l6 4 6-4v6.5H6z" fill="#0f5fbf"/><rect x="0" y="4" width="10" height="10" rx="1.3" fill="#0a4fae"/><ellipse cx="5" cy="9" rx="2.5" ry="3" fill="none" stroke="#fff" stroke-width="1.4"/></svg>
<svg class="a" style="left:283px;top:786px" width="20" height="17" viewBox="0 0 20 17"><path d="M0 2c0-1 .6-1.5 1.5-1.5h5.5l2 2h9.5c1 0 1.5.5 1.5 1.5v11c0 1-.5 1.5-1.5 1.5h-17C.6 16.5 0 16 0 15z" fill="#f5c335"/><path d="M0 6h20v9c0 1-.5 1.5-1.5 1.5h-17C.6 16.5 0 16 0 15z" fill="#fbd55a"/><rect x="4" y="11" width="12" height="3.5" rx=".8" fill="#2b7ed4"/></svg>
<div class="a" style="left:290px;top:807px;width:6px;height:2px;border-radius:1px;background:#888"></div>
<svg class="a" style="left:316px;top:785px" width="19" height="19" viewBox="0 0 19 19"><rect x="0" y="0" width="19" height="19" rx="3.5" fill="#3d8cf0"/><path d="M3 5l5 5 1-4c1-2 3-3 5-2l-3 2 1 3c0 4-4 7-8 6 2-1 3-2 3-3z" fill="#fff"/></svg>
<div class="a" style="left:351px;top:786px;width:16px;height:17px;border-radius:3px;background:#fff"></div>
<svg class="a" style="left:353px;top:790px" width="13" height="9" viewBox="0 0 13 9"><path d="M0.5 8.5L3.5 0.5h1.6L8 8.5H6.3L5.7 6.8H2.8L2.2 8.5zM3.3 5.3h1.9L4.3 2.6zM7.2 0.5h1.7l3.3 8H10.5z" fill="#111"/></svg>
<svg class="a" style="left:382px;top:785px" width="19" height="19" viewBox="0 0 19 19"><path d="M13.5 0.5l5 2.5v13l-5 2.5L5 11l-3 2.5-1.5-1V6.5L2 5.5 5 8zM13.5 5L8 9.5l5.5 4.5z" fill="#1f8ad2"/><path d="M13.5 0.5l5 2.5v13l-5 2.5z" fill="#2ba3ec"/></svg>
<svg class="a" style="left:416px;top:786px" width="18" height="18" viewBox="0 0 18 18"><circle cx="9" cy="9" r="8.5" fill="#db4437"/><path d="M9 9L1.6 4.8A8.5 8.5 0 0 0 6 17.1z" fill="#0f9d58"/><path d="M9 9h8.4a8.5 8.5 0 0 1-11.4 8.1z" fill="#ffcd40"/><circle cx="9" cy="9" r="4" fill="#fff"/><circle cx="9" cy="9" r="3.1" fill="#4285f4"/></svg>
<div class="a" style="left:422px;top:807px;width:6px;height:2px;border-radius:1px;background:#888"></div>
<div class="a" style="left:444px;top:781px;width:28px;height:28px;border-radius:4px;background:#f6eef4;border:1px solid #eadce6"></div>
<svg class="a" style="left:449px;top:786px" width="18" height="17" viewBox="0 0 18 17"><rect x="5" y="0.5" width="13" height="16" rx="1.5" fill="#21a366"/><rect x="5" y="5.5" width="13" height="5.5" fill="#107c41"/><rect x="5" y="11" width="13" height="5.5" fill="#185c37"/><rect x="11" y="0.5" width="7" height="5" fill="#33c481"/><rect x="0" y="4" width="10" height="10" rx="1.3" fill="#107c41"/><path d="M2.5 6l5 5.5M7.5 6l-5 5.5" stroke="#fff" stroke-width="1.5"/></svg>
<div class="a" style="left:453px;top:807px;width:10px;height:2.5px;border-radius:1px;background:#2a70c0"></div>
<svg class="a" style="left:1242px;top:791px" width="10" height="6" viewBox="0 0 10 6"><path d="M0.8 5.2L5 1l4.2 4.2" fill="none" stroke="#222" stroke-width="1.2"/></svg>
<svg class="a" style="left:1264px;top:789px" width="15" height="10" viewBox="0 0 15 10"><path d="M3.5 9.3h8.5a2.7 2.7 0 0 0 .4-5.4A4 4 0 0 0 4.7 3 3.2 3.2 0 0 0 3.5 9.3z" fill="none" stroke="#333" stroke-width="1.1"/></svg>
<div class="t n" style="left:1291.4px;top:791.02px;font-size:8.6px;color:#222;font-weight:normal;">ENG</div>
<svg class="a" style="left:1321px;top:788px" width="14" height="11" viewBox="0 0 14 11"><path d="M1 4a8.5 8.5 0 0 1 12 0M3 6a5.6 5.6 0 0 1 8 0M5 8a2.8 2.8 0 0 1 4 0" fill="none" stroke="#222" stroke-width="1.1"/><circle cx="7" cy="10" r="0.9" fill="#222"/></svg>
<svg class="a" style="left:1340px;top:788px" width="14" height="11" viewBox="0 0 14 11"><path d="M1 3.5h2.5L7 .8v9.4L3.5 7.5H1z" fill="none" stroke="#222" stroke-width="1"/><path d="M9 3.5a2.5 2.5 0 0 1 0 4M11 2a5 5 0 0 1 0 7" fill="none" stroke="#222" stroke-width="1"/></svg>
<div class="t" style="left:1340px;width:72px;text-align:right;top:789.3px;font-size:8.6px;color:#222">7:34 PM</div>
<div class="t" style="left:1340px;width:72px;text-align:right;top:801.3px;font-size:8.6px;color:#222">18/11/2024</div>
<svg class="a" style="left:1418px;top:788px" width="12" height="13" viewBox="0 0 12 13"><path d="M6 1a3.8 3.8 0 0 0-3.8 3.8V8L1 10h10L9.8 8V4.8A3.8 3.8 0 0 0 6 1z" fill="#1a3f8a"/><path d="M4.5 11a1.5 1.5 0 0 0 3 0z" fill="#1a3f8a"/></svg>
</body></html>
